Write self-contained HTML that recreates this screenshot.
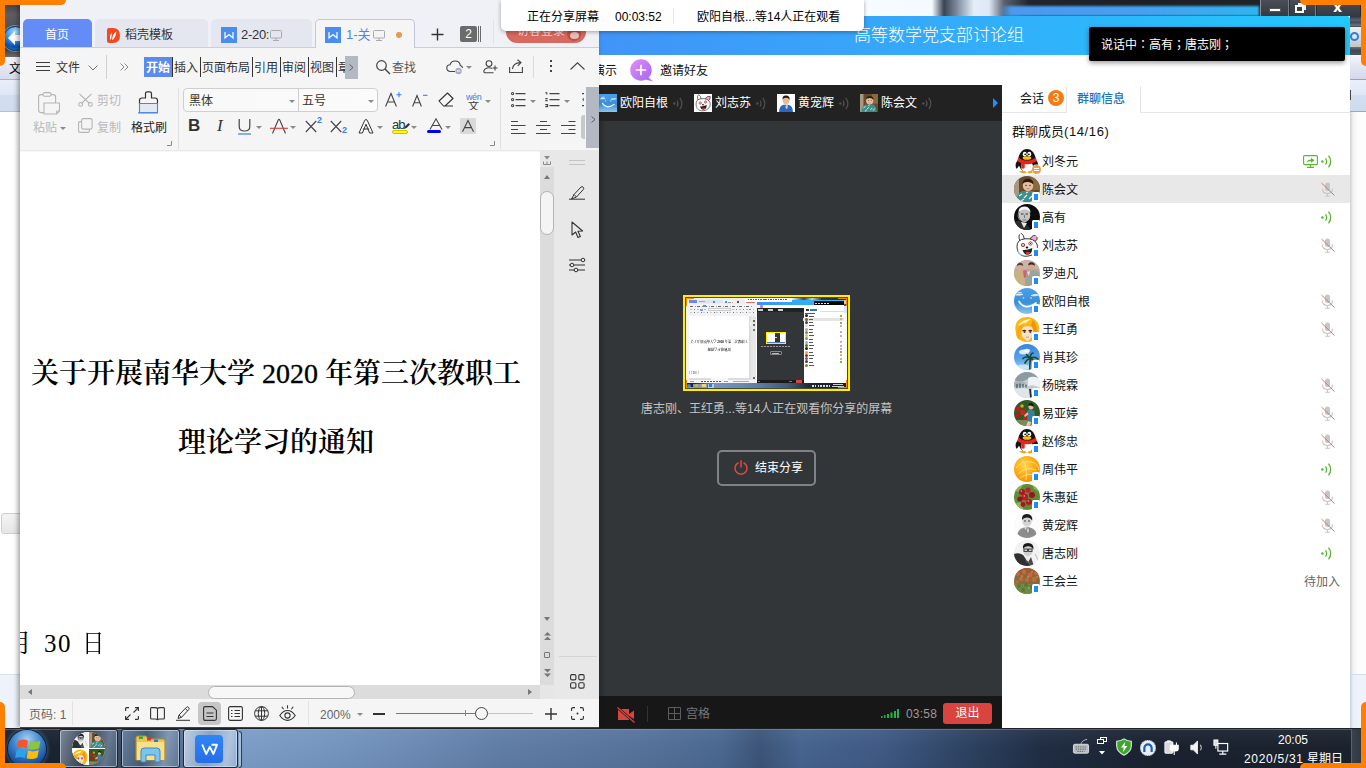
<!DOCTYPE html>
<html lang="zh-CN">
<head>
<meta charset="utf-8">
<title>屏幕分享</title>
<style>
*{box-sizing:border-box;margin:0;padding:0}
html,body{width:1366px;height:768px;overflow:hidden;background:#fff}
body{position:relative;font-family:"Liberation Sans","Noto Sans CJK SC",sans-serif;font-size:12px;color:#222}
.abs{position:absolute}
svg{position:absolute;overflow:visible}
/* ---------- background windows ---------- */
#bgleft{left:0;top:0;width:20px;height:728px;background:#fff;overflow:hidden}
#bgright{left:1350px;top:0;width:16px;height:728px;background:#fff;overflow:hidden}
#topbg{left:599px;top:0;width:767px;height:16px;background:#23272e;overflow:hidden}
/* ---------- WPS ---------- */
#wps{left:20px;top:0;width:579px;height:728px;background:#f5f5f5;box-shadow:-2px 0 5px rgba(0,0,0,.38)}
#wtitle{left:0;top:0;width:579px;height:48px;background:#f0f1f6}
#wmenu{left:0;top:48px;width:579px;height:38px;background:#f5f5f5}
#wribbon{left:0;top:86px;width:579px;height:64px;background:#f5f5f5}
#wdoc{left:0;top:150px;width:520px;height:535px;background:#fff;box-shadow:inset 0 2px 2px -1px rgba(0,0,0,.12)}
#wvs{left:520px;top:150px;width:14px;height:549px;background:#dcdcdc}
#wside{left:534px;top:150px;width:45px;height:549px;background:#e8e8e8}
#whs{left:0;top:685px;width:520px;height:14px;background:#dcdcdc}
#wstatus{left:0;top:699px;width:579px;height:29px;background:#f5f5f5;border-bottom:1px solid #444}

/* tabs */
.tab{position:absolute;top:19px;height:28px;border-radius:5px 5px 0 0;background:#e4e7f0}
.t{position:absolute;white-space:nowrap;line-height:1}
.w12{font-size:12px}
.wic{position:absolute;width:16px;height:16px;background:#4a8df0}

.sep{position:absolute;width:1px;background:#d9d9d9}
.car{position:absolute;width:0;height:0;border-left:3px solid transparent;border-right:3px solid transparent;border-top:3px solid #8a8a8a}
.mi{position:absolute;top:14px;font-size:12px;line-height:1;color:#333;white-space:nowrap}
.mb{position:absolute;top:9px;width:1px;height:20px;background:#333}

.rt{position:absolute;font-size:12px;line-height:1;white-space:nowrap;color:#333}
.dis{color:#b9b9b9}

.tri{position:absolute;width:0;height:0}
.h1{position:absolute;white-space:nowrap;font-family:"Liberation Serif","Noto Serif CJK SC",serif;font-weight:600;font-size:28px;line-height:1;color:#000}
/* ---------- QQ ---------- */
#qq{left:599px;top:16px;width:751px;height:712px;background:#fff}
#qhead{left:0;top:0;width:751px;height:39px;border-radius:0 3px 0 0;background:linear-gradient(90deg,#4194f7 0%,#36a8f9 40%,#22c8fc 100%)}
#qbar{left:0;top:39px;width:751px;height:30px;background:#fff}
#qdark{left:0;top:69px;width:403px;height:643px;background:linear-gradient(90deg,#292c2f 0,#323639 7px)}
#qstrip{left:0;top:0;width:403px;height:36px;background:#222}
#qbot{left:0;top:611px;width:403px;height:32px;background:#171717}
#qside{left:403px;top:70px;width:348px;height:642px;background:#fff}

.qt{position:absolute;font-size:12px;line-height:1;white-space:nowrap}
.pav{position:absolute;top:9px;width:18px;height:18px}
.pn{position:absolute;top:12px;font-size:12px;line-height:1;color:#fff;white-space:nowrap}
.row{position:absolute;left:0;width:348px;height:28px}
.av{position:absolute;left:12px;top:1px;width:26px;height:26px;border-radius:50%;overflow:hidden}
.nm{position:absolute;left:40px;top:9px;font-size:12px;line-height:1;color:#111;white-space:nowrap}
.ph{position:absolute;left:30px;top:17px;width:8px;height:10px;background:#fff;border-radius:1.5px;box-shadow:0 0 1px rgba(0,0,0,.25)}
.ph:after{content:"";position:absolute;left:1.7px;top:1.8px;width:4.6px;height:6.2px;background:#1e8bf0}
/* ---------- overlays ---------- */
#banner{left:501px;top:0;width:363px;height:31px;background:#fff;border-radius:0 0 5px 5px;box-shadow:0 1px 4px rgba(0,0,0,.35)}
#tip{left:1089px;top:27px;width:256px;height:34px;background:#000;border-radius:2px;box-shadow:0 2px 5px rgba(0,0,0,.4)}
#taskbar{left:0;top:728px;width:1366px;height:40px;overflow:hidden;background:linear-gradient(90deg,#18202c 0,#1a2430 58px,#7b9cc6 245px,#7696c0 320px,#6e8cb6 400px,#607da6 500px,#56729a 640px,#4a6890 720px,#3c5478 760px,#46648e 800px,#3f5a84 880px,#2e4464 960px,#202e44 1040px,#1a2230 1150px,#1a222e 100%);border-top:1px solid #1e2228;box-shadow:inset 0 1px 0 rgba(150,175,210,.35)}
.tb{position:absolute;top:0;height:39px;border:1px solid rgba(20,28,40,.9);border-radius:3px;box-shadow:inset 0 0 0 1px rgba(225,235,250,.55)}
.tx{position:absolute;font-size:12px;line-height:1;color:#fff;white-space:nowrap}
.org{background:#ff8000}
</style>
</head>
<body>
<div id="bgleft" class="abs">
  <div class="abs" style="left:0;top:0;width:20px;height:57px;background:linear-gradient(180deg,#3a3a3c 0,#5e5e62 25%,#4c4c50 60%,#3a3a3e 85%,#6a6e74 100%)"></div>
  <div class="abs" style="left:3px;top:26px;width:25px;height:25px;border-radius:50%;background:radial-gradient(circle at 50% 22%,#b8e0ff 0,#3f96ea 40%,#0b4fb0 70%,#19a0e0 100%);border:1px solid #143c80;box-shadow:0 0 0 1px rgba(150,160,170,.7)"></div>
  <svg style="left:8px;top:31px" width="12" height="14" viewBox="0 0 12 14"><path d="M0 7 L7 0 V4 H12 V10 H7 V14 Z" fill="#fff"/></svg>
  <div class="abs" style="left:0;top:57px;width:20px;height:22px;background:linear-gradient(180deg,#f4f5fb,#e2e5f2 50%,#d8dcec)"></div>
  <span class="t" style="left:9px;top:63px;font-size:12px;color:#000">文</span><span class="t" style="left:18px;top:90px;font-size:12px;color:#1a2a5a">组</span>
  <div class="abs" style="left:0;top:79px;width:20px;height:33px;background:linear-gradient(180deg,#e9eff9,#dde7f4 48%,#d3dff0 50%,#d0ddef);border-top:1px solid #aab2c8;border-bottom:1px solid #b4c0d6"></div>
  <div class="abs" style="left:1px;top:513px;width:26px;height:21px;border:1px solid #cfcfcf;border-radius:3px;background:linear-gradient(180deg,#f4f4f4,#e6e6e6)"></div>
  <div class="abs" style="left:0;top:674px;width:20px;height:54px;background:#eef3fb;border-top:1px solid #d6e0f0"></div>
</div>
<div id="bgright" class="abs">
  <div class="abs" style="left:0;top:0;width:16px;height:16px;background:#3a3f47"></div>
  <div class="abs" style="left:0;top:16px;width:16px;height:11px;background:linear-gradient(180deg,#2c323c 0,#58606c 35%,#454d59 60%,#6c7480 85%,#3a424e 100%)"></div>
  <div class="abs" style="left:0;top:27px;width:16px;height:20px;background:linear-gradient(180deg,#f0f0f0,#dcdcdc 50%,#c4c4c4)"></div>
  <div class="abs" style="left:0px;top:32px;width:9px;height:9px;border-radius:50%;border:2px solid #2f7fdc;background:#dfe8f4"></div>
  <div class="abs" style="left:0;top:47px;width:16px;height:8px;background:linear-gradient(180deg,#6a727e,#414955 40%,#4c5460)"></div>
  <div class="abs" style="left:0;top:55px;width:16px;height:25px;background:linear-gradient(180deg,#f4f5fb,#e2e5f2 50%,#d4d8ea);border-bottom:1px solid #98a4c0"></div>
  <div class="abs" style="left:0;top:80px;width:16px;height:32px;background:linear-gradient(180deg,#eaf0fa,#dfe8f5 48%,#d2dff0 50%,#cddbee);border-bottom:1px solid #98a8c4"></div>
  <div class="abs" style="left:0;top:90px;width:1px;height:10px;background:#444"></div>
  <div class="abs" style="left:0;top:112px;width:16px;height:562px;background:linear-gradient(90deg,#cfcfcf 0,#f2f2f2 3px,#fdfdfd 8px)"></div>
  <div class="abs" style="left:0;top:674px;width:16px;height:54px;background:linear-gradient(90deg,#c9cfd8 0,#e9eef8 3px,#eef3fb 8px);border-top:1px solid #d0dbee"></div>
</div>
<div id="topbg" class="abs">
  <div class="abs" style="left:265px;top:0;width:502px;height:16px;background:linear-gradient(90deg,#f7fcff 0,#f3f9fc 68px,#3a4452 80px,#7a8698 92px,#e4eefa 110px,#dfe8f4 125px,#5a6270 140px,#22262c 165px,#1c2026 277px,#23272e 100%)"></div>
  <div class="abs" style="left:400px;top:6px;width:260px;height:10px;background:linear-gradient(90deg,rgba(74,154,240,0) 0,#4a9af0 12px,#46a0f0 50%,#30b4f0 100%);filter:blur(1px)"></div>
  <div class="abs" style="left:661px;top:0;width:100px;height:16px;background:linear-gradient(180deg,#4a4e56,#353a42);border-left:1px solid #8a8e96"></div>
  <div class="abs" style="left:689px;top:0;width:1px;height:16px;background:#7a7e86;box-shadow:1px 0 0 #2a2e34"></div>
  <div class="abs" style="left:716px;top:0;width:1px;height:16px;background:#7a7e86;box-shadow:1px 0 0 #2a2e34"></div>
  <div class="abs" style="left:670px;top:8px;width:12px;height:4px;background:#fff;border:1px solid #555;border-radius:1px"></div>
  <div class="abs" style="left:699px;top:3px;width:8px;height:7px;border:2px solid #eee;border-top-width:2px"></div>
  <div class="abs" style="left:696px;top:5px;width:9px;height:8px;border:2px solid #fff;background:#3a3f47"></div>
  <span class="t" style="left:734px;top:0px;font-size:14px;font-weight:bold;color:#fff;font-family:'DejaVu Sans','Liberation Sans',sans-serif">x</span>
</div>

<div id="qq" class="abs">
  <div id="qhead" class="abs"><span class="qt" style="left:255px;top:11px;font-size:17px;color:#fff;font-weight:300">高等数学党支部讨论组</span></div>
  <div id="qbar" class="abs">
    <span class="qt" style="left:-6px;top:10px;color:#111">演示</span>
    <svg style="left:30.500px;top:3.800px" width="24" height="23" viewBox="0 0 23 22"><defs><linearGradient id="pg" x1="0" y1="0" x2="1" y2="1"><stop offset="0" stop-color="#e58cf7"/><stop offset="1" stop-color="#a368f5"/></linearGradient></defs><path d="M17 17 L22 21.5 L14 19.5 Z" fill="#a96cf5"/><circle cx="10.5" cy="10.5" r="10.3" fill="url(#pg)"/><path d="M10.5 5.5 V15.5 M5.5 10.5 H15.5" stroke="#fff" stroke-width="1.6"/></svg>
    <span class="qt" style="left:61px;top:10px;color:#111">邀请好友</span>
  </div>
  <div id="qdark" class="abs">
    <div id="qstrip" class="abs">
      <svg style="left:0px;top:9px" width="18" height="18" viewBox="0 0 26 26"><defs><linearGradient id="skAs0" x1="0" y1="0" x2="0" y2="1"><stop offset="0" stop-color="#4aa0e8"/><stop offset=".55" stop-color="#3a8ed8"/><stop offset="1" stop-color="#8cc8f2"/></linearGradient></defs><rect width="26" height="26" fill="url(#skAs0)"/><path d="M2 7 Q5 5 9 6.500 Q6 7.500 2 7 Z M17 7.500 Q21 5.500 25 7 Q21 8.500 17 7.500 Z M3 5 Q6 4 8 4.800" fill="#eaf6ff" stroke="#eaf6ff" stroke-width=".8" opacity=".9"/><path d="M5 13.500 Q11 23 22 15" fill="none" stroke="#f4fbff" stroke-width="1.700" stroke-linecap="round"/><circle cx="9.500" cy="10" r=".8" fill="#d8eeff"/><circle cx="17" cy="10" r=".8" fill="#d8eeff"/></svg>
      <span class="pn" style="left:21px">欧阳自根</span><svg style="left:74px;top:12px" width="11" height="13" viewBox="0 0 11 13"><circle cx="1.300" cy="6.500" r="1.200" fill="#505050"/><path d="M4 3.500 Q6 6.500 4 9.500 M6.800 .8 Q10.800 6.500 6.800 12.200" fill="none" stroke="#505050" stroke-width="1.200"/></svg>
      <svg style="left:95px;top:9px" width="18" height="18" viewBox="0 0 26 26"><rect width="26" height="26" fill="#fff"/><path d="M6 9 Q3.500 3 7 1 Q10 3 10.500 7.500 Z" fill="#fff" stroke="#222" stroke-width=".9"/><path d="M16 7 Q19 2 23.500 3.500 Q24 8 20 10.500 Z" fill="#f4a6c4" stroke="#222" stroke-width=".9"/><path d="M3 15 Q2.500 7.500 11 6.800 Q20 6 23 12 Q25 19 18 23 Q10 26 5.500 22 Q3 19.500 3 15 Z" fill="#fff" stroke="#222" stroke-width=".9"/><path d="M4 17 Q5 22 10 23.500 Q5.500 24 3.500 19 Z" fill="#a8d0ee"/><circle cx="9" cy="13" r="1.700" fill="#fff" stroke="#c02020" stroke-width=".9"/><circle cx="16.500" cy="11.500" r="1.700" fill="#fff" stroke="#c02020" stroke-width=".9"/><circle cx="9" cy="13" r=".6" fill="#111"/><circle cx="16.500" cy="11.500" r=".6" fill="#111"/><ellipse cx="13" cy="15.500" rx="1.300" ry="1" fill="#111"/><path d="M8.500 18 Q13 18.500 18.500 16 Q18 22.500 13.500 22.800 Q10 22.500 8.500 18 Z" fill="#222"/><path d="M11.500 20.500 Q14 19 16 20.300 Q15.500 22.500 13.500 22.800 Q12 22.300 11.500 20.500 Z" fill="#e83030"/></svg>
      <span class="pn" style="left:116px">刘志苏</span><svg style="left:157px;top:12px" width="11" height="13" viewBox="0 0 11 13"><circle cx="1.300" cy="6.500" r="1.200" fill="#505050"/><path d="M4 3.500 Q6 6.500 4 9.500 M6.800 .8 Q10.800 6.500 6.800 12.200" fill="none" stroke="#505050" stroke-width="1.200"/></svg>
      <svg style="left:178px;top:9px" width="18" height="18" viewBox="0 0 26 26"><rect width="26" height="26" fill="#fdfdfd"/><path d="M3 26 Q3 17 10 15.500 H16 Q23 17 23 26 Z" fill="#2668c8"/><ellipse cx="13" cy="9" rx="4.800" ry="5.800" fill="#e8bc98"/><path d="M8 8 Q7.500 1.800 13 2 Q18.800 2 18.200 8.500 Q16 4.800 12.500 5.500 Q9.500 5.500 8 8 Z" fill="#1c1c1c"/><path d="M12 18 Q13 14.500 15.500 16 Q16.500 19 14.500 22 Q12.500 21.500 12 18 Z" fill="#e8bc98"/></svg>
      <span class="pn" style="left:199px">黄宠辉</span><svg style="left:240px;top:12px" width="11" height="13" viewBox="0 0 11 13"><circle cx="1.300" cy="6.500" r="1.200" fill="#505050"/><path d="M4 3.500 Q6 6.500 4 9.500 M6.800 .8 Q10.800 6.500 6.800 12.200" fill="none" stroke="#505050" stroke-width="1.200"/></svg>
      <svg style="left:261px;top:9px" width="18" height="18" viewBox="0 0 26 26"><rect width="26" height="26" fill="#6b4a2c"/><rect x="0" y="0" width="5" height="26" fill="#a89880"/><rect x="17" y="0" width="9" height="14" fill="#8a6a3c"/><path d="M2 26 Q3 16 9 15 L19 15 Q24 17 24 26 Z" fill="#3e8e8c"/><path d="M5 20 L8 18 M10 22 L13 19 M15 23 L18 20 M7 25 L10 23 M19 24 L21 21 M12 17 L14 16" stroke="#e4f2f0" stroke-width="1.300"/><ellipse cx="14" cy="9.500" rx="5.200" ry="5.800" fill="#e6bf9f"/><path d="M8.500 8 Q9 2.500 14 2.800 Q19.500 3 19.500 8.500 Q17 5.500 13 6 Q10 6 8.500 8 Z" fill="#2a1c12"/><circle cx="12" cy="9.500" r=".7" fill="#2a1c12"/><circle cx="16" cy="9.500" r=".7" fill="#2a1c12"/><path d="M12.500 12.500 Q14 13.300 15.500 12.500" stroke="#b06050" stroke-width=".7" fill="none"/></svg>
      <span class="pn" style="left:282px">陈会文</span><svg style="left:323px;top:12px" width="11" height="13" viewBox="0 0 11 13"><circle cx="1.300" cy="6.500" r="1.200" fill="#505050"/><path d="M4 3.500 Q6 6.500 4 9.500 M6.800 .8 Q10.800 6.500 6.800 12.200" fill="none" stroke="#505050" stroke-width="1.200"/></svg>
      <div class="tri" style="left:394px;top:13px;border-top:5px solid transparent;border-bottom:5px solid transparent;border-left:5px solid #1e90ff"></div>
    </div>
    <div class="abs" style="left:84px;top:210px;width:167px;height:96px;background:#ffee00"></div>
    <div id="mini" class="abs" style="left:87px;top:213px;width:161px;height:90px;background:#fff;overflow:hidden;outline:1px solid #4a4a30">
      <div class="abs" style="left:0;top:0;width:3px;height:90px;background:#f4f4f4"></div>
      <div class="abs" style="left:106px;top:0;width:55px;height:2px;background:linear-gradient(90deg,#eee 0,#444 12px,#ccc 20px,#333 30px,#2a2e34)"></div>
      <div class="abs" style="left:70px;top:2px;width:88px;height:5px;background:linear-gradient(90deg,#3f8cf6,#34a6f8 40%,#22c8fb)"></div>
      <div class="abs" style="left:70px;top:7px;width:88px;height:3px;background:#fff"></div>
      <div class="abs" style="left:74px;top:7px;width:2.500px;height:2.500px;border-radius:50%;background:#c070f0"></div>
      <div class="abs" style="left:70px;top:10px;width:48px;height:75px;background:#323639"></div>
      <div class="abs" style="left:70px;top:10px;width:48px;height:4px;background:#222"></div>
      <div class="abs" style="left:72px;top:11px;width:30px;height:2px;background:repeating-linear-gradient(90deg,#ccc 0 5px,#222 5px 10px)"></div>
      <div class="abs" style="left:70px;top:81.500px;width:48px;height:3.500px;background:#1b1b1b"></div>
      <div class="abs" style="left:72px;top:82.500px;width:2px;height:1.500px;background:#d8453f"></div>
      <div class="abs" style="left:103px;top:83px;width:3px;height:1px;background:#22b14c"></div>
      <div class="abs" style="left:110px;top:82px;width:6px;height:2.500px;background:#d9443f"></div>
      <div class="abs" style="left:79.500px;top:34px;width:20px;height:11.500px;background:#ffee00"></div>
      <div class="abs" style="left:80.500px;top:35px;width:18px;height:9.500px;background:linear-gradient(90deg,#fff 0 44%,#323639 44% 73%,#fff 73%)"></div>
      <div class="abs" style="left:80.500px;top:43.500px;width:18px;height:1px;background:#5a7aa4"></div>
      <div class="abs" style="left:88.500px;top:38.500px;width:2.500px;height:1.500px;background:#ffee00"></div>
      <div class="abs" style="left:75px;top:47.500px;width:29px;height:1px;background:repeating-linear-gradient(90deg,#999 0 2px,#444 2px 3px)"></div>
      <div class="abs" style="left:83.500px;top:53px;width:12px;height:4px;border:.5px solid #888;border-radius:1px"></div>
      <div class="abs" style="left:86px;top:54.500px;width:7px;height:1px;background:#bbb"></div>
      <div class="abs" style="left:117.500px;top:10px;width:40.500px;height:75px;background:#fff"></div>
      <div class="abs" style="left:119.500px;top:11px;width:11px;height:1.500px;background:repeating-linear-gradient(90deg,#333 0 3px,#fff 3px 4px,#2a7ac8 4px 11px)"></div>
      <div class="abs" style="left:134px;top:13px;width:24px;height:.5px;background:#ddd"></div>
      <div class="abs" style="left:119px;top:14.500px;width:10px;height:1px;background:#555"></div>
      <div class="abs" style="left:119px;top:16.4px;width:3px;height:3px;border-radius:50%;background:#222"></div><div class="abs" style="left:122.5px;top:17.6px;width:5px;height:1px;background:#555"></div><div class="abs" style="left:154px;top:17.0px;width:2px;height:2px;background:#70c040"></div><div class="abs" style="left:117px;top:19.7px;width:41px;height:3.3px;background:#e4e4e4"></div><div class="abs" style="left:119px;top:19.7px;width:3px;height:3px;border-radius:50%;background:#7a5a40"></div><div class="abs" style="left:122.5px;top:20.9px;width:4px;height:1px;background:#555"></div><div class="abs" style="left:154px;top:20.3px;width:2px;height:2px;background:#e8a0a0"></div><div class="abs" style="left:119px;top:23.0px;width:3px;height:3px;border-radius:50%;background:#444"></div><div class="abs" style="left:122.5px;top:24.2px;width:4px;height:1px;background:#555"></div><div class="abs" style="left:154px;top:23.6px;width:2px;height:2px;background:#70c040"></div><div class="abs" style="left:119px;top:26.2px;width:3px;height:3px;border-radius:50%;background:#ddd"></div><div class="abs" style="left:122.5px;top:27.4px;width:5px;height:1px;background:#555"></div><div class="abs" style="left:154px;top:26.8px;width:2px;height:2px;background:#e8a0a0"></div><div class="abs" style="left:119px;top:29.5px;width:3px;height:3px;border-radius:50%;background:#c0a090"></div><div class="abs" style="left:122.5px;top:30.7px;width:4px;height:1px;background:#555"></div><div class="abs" style="left:119px;top:32.8px;width:3px;height:3px;border-radius:50%;background:#3a90e0"></div><div class="abs" style="left:122.5px;top:34.0px;width:4px;height:1px;background:#555"></div><div class="abs" style="left:154px;top:33.4px;width:2px;height:2px;background:#e8a0a0"></div><div class="abs" style="left:119px;top:36.1px;width:3px;height:3px;border-radius:50%;background:#f0c020"></div><div class="abs" style="left:122.5px;top:37.3px;width:5px;height:1px;background:#555"></div><div class="abs" style="left:154px;top:36.7px;width:2px;height:2px;background:#e8a0a0"></div><div class="abs" style="left:119px;top:39.4px;width:3px;height:3px;border-radius:50%;background:#4a98e0"></div><div class="abs" style="left:122.5px;top:40.6px;width:4px;height:1px;background:#555"></div><div class="abs" style="left:119px;top:42.6px;width:3px;height:3px;border-radius:50%;background:#a0a8b0"></div><div class="abs" style="left:122.5px;top:43.8px;width:4px;height:1px;background:#555"></div><div class="abs" style="left:154px;top:43.2px;width:2px;height:2px;background:#e8a0a0"></div><div class="abs" style="left:119px;top:45.9px;width:3px;height:3px;border-radius:50%;background:#4a7a30"></div><div class="abs" style="left:122.5px;top:47.1px;width:5px;height:1px;background:#555"></div><div class="abs" style="left:154px;top:46.5px;width:2px;height:2px;background:#e8a0a0"></div><div class="abs" style="left:119px;top:49.2px;width:3px;height:3px;border-radius:50%;background:#222"></div><div class="abs" style="left:122.5px;top:50.4px;width:4px;height:1px;background:#555"></div><div class="abs" style="left:154px;top:49.8px;width:2px;height:2px;background:#e8a0a0"></div><div class="abs" style="left:119px;top:52.5px;width:3px;height:3px;border-radius:50%;background:#f8a010"></div><div class="abs" style="left:122.5px;top:53.7px;width:4px;height:1px;background:#555"></div><div class="abs" style="left:154px;top:53.1px;width:2px;height:2px;background:#70c040"></div><div class="abs" style="left:119px;top:55.8px;width:3px;height:3px;border-radius:50%;background:#a02030"></div><div class="abs" style="left:122.5px;top:57.0px;width:5px;height:1px;background:#555"></div><div class="abs" style="left:154px;top:56.4px;width:2px;height:2px;background:#e8a0a0"></div><div class="abs" style="left:119px;top:59.0px;width:3px;height:3px;border-radius:50%;background:#666"></div><div class="abs" style="left:122.5px;top:60.2px;width:4px;height:1px;background:#555"></div><div class="abs" style="left:154px;top:59.6px;width:2px;height:2px;background:#e8a0a0"></div><div class="abs" style="left:119px;top:62.3px;width:3px;height:3px;border-radius:50%;background:#444"></div><div class="abs" style="left:122.5px;top:63.5px;width:4px;height:1px;background:#555"></div><div class="abs" style="left:154px;top:62.9px;width:2px;height:2px;background:#70c040"></div><div class="abs" style="left:119px;top:65.6px;width:3px;height:3px;border-radius:50%;background:#7a8a30"></div><div class="abs" style="left:122.5px;top:66.8px;width:5px;height:1px;background:#555"></div>
      <div class="abs" style="left:158px;top:2px;width:3px;height:83px;background:linear-gradient(180deg,#ccc 0 4px,#556 4px 6px,#dde4f2 6px 13px,#fafafa 13px)"></div>
      <div class="abs" style="left:127.500px;top:3px;width:30px;height:4px;background:#000"></div>
      <div class="abs" style="left:129px;top:4.500px;width:14px;height:1px;background:repeating-linear-gradient(90deg,#ddd 0 2px,#000 2px 3px)"></div>
      <!-- WPS -->
      <div class="abs" style="left:2.500px;top:0;width:68px;height:85.300px;background:#fff"></div>
      <div class="abs" style="left:2.500px;top:0;width:68px;height:17.500px;background:#f3f3f5"></div>
      <div class="abs" style="left:2.500px;top:0;width:68px;height:5.500px;background:#eceef4"></div>
      <div class="abs" style="left:3px;top:2.300px;width:8px;height:3.200px;background:#638cf7"></div>
      <div class="abs" style="left:11.500px;top:2.300px;width:13px;height:3.200px;background:#e0e3ec"></div>
      <div class="abs" style="left:25px;top:2.300px;width:11.500px;height:3.200px;background:#dfe4f0"></div>
      <div class="abs" style="left:37px;top:2.300px;width:11.500px;height:3.200px;background:#f5f5f5"></div>
      <div class="abs" style="left:13px;top:3.300px;width:6px;height:1.200px;background:#aaa"></div>
      <div class="abs" style="left:26.500px;top:3px;width:2px;height:2px;background:#4a8df0"></div>
      <div class="abs" style="left:38.500px;top:3px;width:2px;height:2px;background:#4a8df0"></div>
      <div class="abs" style="left:41.500px;top:3.500px;width:3px;height:1px;background:#7aa0f0"></div>
      <div class="abs" style="left:46px;top:3.500px;width:1px;height:1px;background:#e99a4c"></div>
      <div class="abs" style="left:51px;top:3px;width:2px;height:2px;background:#555"></div>
      <div class="abs" style="left:59.500px;top:2.500px;width:9px;height:2.500px;border-radius:1.200px;background:#d8695e"></div>
      <div class="abs" style="left:4px;top:7.500px;width:62px;height:1.200px;background:repeating-linear-gradient(90deg,#666 0 3px,#f3f3f5 3px 4.500px,#999 4.500px 6px,#f3f3f5 6px 7px)"></div>
      <div class="abs" style="left:16.800px;top:7px;width:3.300px;height:2.300px;background:#5b8cec"></div>
      <div class="abs" style="left:4px;top:11px;width:64px;height:1.200px;background:repeating-linear-gradient(90deg,#bbb 0 2px,#f3f3f5 2px 3.500px,#888 3.500px 5px,#f3f3f5 5px 7px)"></div>
      <div class="abs" style="left:4px;top:14px;width:64px;height:1.200px;background:repeating-linear-gradient(90deg,#ccc 0 2px,#f3f3f5 2px 4px,#777 4px 5px,#f3f3f5 5px 6.500px)"></div>
      <div class="abs" style="left:14px;top:11px;width:2.500px;height:2px;background:#7aa0e8"></div>
      <div class="abs" style="left:21.500px;top:10.300px;width:23px;height:2.800px;background:#fafafa;border:.5px solid #ccc"></div>
      <div class="abs" style="left:63.300px;top:17.500px;width:1.600px;height:64.500px;background:#dcdcdc"></div>
      <div class="abs" style="left:64.900px;top:17.500px;width:5.300px;height:64.500px;background:#e8e8e8"></div>
      <div class="abs" style="left:66.500px;top:22px;width:2px;height:1.500px;background:#666"></div>
      <div class="abs" style="left:66.500px;top:26px;width:2px;height:2px;background:#666"></div>
      <div class="abs" style="left:66.500px;top:30.500px;width:2px;height:2px;background:#777"></div>
      <div class="abs" style="left:66.500px;top:79px;width:2px;height:2px;background:#666"></div>
      <div class="abs" style="left:63.500px;top:22.500px;width:1.300px;height:5px;background:#f4f4f4"></div>
      <div class="abs" style="left:2.500px;top:0;width:520px;height:728px;transform:scale(.1172);transform-origin:0 0;pointer-events:none"><div class="h1" style="left:11px;top:360px">关于开展南华大学 2020 年第三次教职工</div><div class="h1" style="left:158px;top:429px">理论学习的通知</div><div class="abs" style="left:0;top:630px;font-family:'Liberation Serif','Noto Serif CJK SC',serif;font-size:25px;line-height:1;color:#000;white-space:nowrap">月 30 日</div></div>
            <div class="abs" style="left:2.500px;top:80.200px;width:61px;height:1.700px;background:#dcdcdc"></div>
      <div class="abs" style="left:24.500px;top:80.400px;width:17px;height:1.300px;background:#f7f7f7"></div>
      <div class="abs" style="left:2.500px;top:81.900px;width:68px;height:3.400px;background:#f5f5f5"></div>
      <div class="abs" style="left:4px;top:83px;width:4px;height:1px;background:#999"></div>
      <div class="abs" style="left:15px;top:83px;width:20px;height:1.200px;background:repeating-linear-gradient(90deg,#555 0 1.500px,#f5f5f5 1.500px 3px)"></div>
      <div class="abs" style="left:38px;top:83px;width:4px;height:1px;background:#999"></div>
      <div class="abs" style="left:46.500px;top:83.300px;width:16px;height:.5px;background:#aaa"></div>
      <!-- banner -->
      <div class="abs" style="left:58.700px;top:0;width:47px;height:3.600px;background:#fff"></div>
      <div class="abs" style="left:62px;top:1.300px;width:40px;height:1px;background:repeating-linear-gradient(90deg,#333 0 1.500px,#fff 1.500px 2.500px);opacity:.8"></div>
      <!-- taskbar -->
      <div class="abs" style="left:0;top:85.300px;width:161px;height:4.700px;background:linear-gradient(90deg,#18202c 0,#1a2430 7px,#7395c2 29px,#6a8ab4 56px,#587aa6 75px,#425878 103px,#222c3c 122px,#1a222e 135px)"></div>
      <div class="abs" style="left:1px;top:85.500px;width:4.300px;height:4.300px;border-radius:50%;background:#3f86d0"></div>
      <div class="abs" style="left:7.200px;top:85.500px;width:6.500px;height:4.300px;background:#8898a8"></div>
      <div class="abs" style="left:9px;top:86px;width:3.300px;height:3.300px;border-radius:50%;background:#d8b040"></div>
      <div class="abs" style="left:14.300px;top:85.500px;width:6.700px;height:4.300px;background:#8aa0b8"></div>
      <div class="abs" style="left:16px;top:86px;width:3.500px;height:3.300px;background:#f0d878"></div>
      <div class="abs" style="left:21.500px;top:85.500px;width:6.300px;height:4.300px;background:#b8cce4"></div>
      <div class="abs" style="left:23px;top:86px;width:3.300px;height:3.300px;background:#2a7af0"></div>
      <div class="abs" style="left:126px;top:87px;width:19px;height:1.500px;background:repeating-linear-gradient(90deg,#ddd 0 1.500px,rgba(0,0,0,0) 1.500px 2.800px)"></div>
      <div class="abs" style="left:147px;top:86.200px;width:10px;height:1px;background:#ccc"></div>
      <div class="abs" style="left:146px;top:88.200px;width:11.500px;height:1px;background:#ccc"></div>
      <!-- orange corners -->
      <div class="abs org" style="left:0;top:0;width:7.700px;height:.7px"></div><div class="abs org" style="left:0;top:0;width:.7px;height:7.700px"></div>
      <div class="abs org" style="left:152.300px;top:0;width:7.700px;height:.7px"></div><div class="abs org" style="left:160.300px;top:0;width:.7px;height:7.700px"></div>
      <div class="abs org" style="left:0;top:89.300px;width:7.700px;height:.7px"></div><div class="abs org" style="left:0;top:82.300px;width:.7px;height:7.700px"></div>
      <div class="abs org" style="left:152.300px;top:89.300px;width:7.700px;height:.7px"></div><div class="abs org" style="left:160.300px;top:82.300px;width:.7px;height:7.700px"></div>
    </div>
    <span class="qt" style="left:42px;top:318px;color:#c4c4c4">唐志刚、王红勇...等14人正在观看你分享的屏幕</span>
    <div class="abs" style="left:118px;top:365px;width:99px;height:36px;border:2px solid #808386;border-radius:5px"></div>
    <svg style="left:135px;top:375px" width="14" height="15" viewBox="0 0 14 15"><path d="M4 3 A6 6 0 1 0 10 3" fill="none" stroke="#e04a43" stroke-width="1.5" stroke-linecap="round"/><path d="M7 .8 V7" stroke="#e04a43" stroke-width="1.5" stroke-linecap="round"/></svg>
    <span class="qt" style="left:156px;top:377px;color:#fff">结束分享</span>
    <div id="qbot" class="abs">
      <svg style="left:18px;top:11px" width="20" height="16" viewBox="0 0 20 16"><path d="M1 2 H12 V7 L17 3.5 V12 L12 9 V13 H1 Z" fill="#d8453f"/><path d="M1 1 L17 15" stroke="#1b1b1b" stroke-width="2.4"/><path d="M.5 .5 L17.5 15.5" stroke="#d8453f" stroke-width="1.2"/></svg>
      <div class="abs" style="left:48px;top:10px;width:1px;height:16px;background:#333"></div>
      <svg style="left:69px;top:11px" width="13" height="13" viewBox="0 0 13 13"><path d="M.5 .5 H12.5 V12.5 H.5 Z M6.5 .5 V12.5 M.5 6.5 H12.5" fill="none" stroke="#5c5c5c" stroke-width="1"/></svg>
      <span class="qt" style="left:87px;top:12px;color:#767676">宫格</span>
      <svg style="left:282px;top:13px" width="18" height="9" viewBox="0 0 18 9"><g fill="#22b14c"><rect x="0" y="7" width="1.5" height="2"/><rect x="3" y="6" width="1.5" height="3"/><rect x="6" y="5" width="2" height="4"/><rect x="9.5" y="3.5" width="2" height="5.5"/><rect x="13" y="2" width="2" height="7"/><rect x="16" y="0" width="2" height="9"/></g></svg>
      <span class="qt" style="left:307px;top:12px;color:#9a9a9a;letter-spacing:.2px">03:58</span>
      <div class="abs" style="left:344px;top:7px;width:49px;height:21px;background:#d9443f;border-radius:3px;color:#fff;font-size:12px;line-height:21px;text-align:center">退出</div>
    </div>
  </div>
  <div id="qside" class="abs">
    <span class="qt" style="left:18px;top:7px;color:#111">会话</span>
    <div class="abs" style="left:46px;top:4px;width:16px;height:16px;border-radius:50%;background:#f57a14;color:#fff;font-size:12px;line-height:16px;text-align:center">3</div>
    <div class="abs" style="left:0;top:26px;width:65px;height:1px;background:#e6e6e6"></div>
    <div class="abs" style="left:64px;top:0;width:1px;height:27px;background:#e6e6e6"></div>
    <span class="qt" style="left:75px;top:7px;color:#1a74c0;font-weight:500">群聊信息</span>
    <div class="abs" style="left:138px;top:0;width:1px;height:27px;background:#e6e6e6"></div>
    <div class="abs" style="left:138px;top:26px;width:210px;height:1px;background:#e6e6e6"></div>
    <span class="qt" style="left:10px;top:39px;color:#111;font-size:13px">群聊成员<span style="letter-spacing:.6px">(14/16)</span></span>
    <div class="row" style="top:61px"><div class="av"><svg style="left:0;top:0" width="26" height="26" viewBox="1 0.8 24 25.2" preserveAspectRatio="none"><ellipse cx="13" cy="13" rx="8.300" ry="11.200" fill="#141414"/><path d="M5.200 12 Q1.200 15.500 3 21.500 Q5.200 19.500 6.200 16.500 Z M20.800 12 Q24.800 15.500 23 21.500 Q20.800 19.500 19.800 16.500 Z" fill="#141414"/><ellipse cx="13" cy="18.700" rx="5.500" ry="5.500" fill="#fff"/><ellipse cx="10.900" cy="6.800" rx="1.800" ry="2.400" fill="#fff"/><ellipse cx="15.100" cy="6.800" rx="1.800" ry="2.400" fill="#fff"/><circle cx="11.300" cy="7" r=".8" fill="#111"/><circle cx="14.700" cy="7" r=".8" fill="#111"/><ellipse cx="13" cy="10.600" rx="4" ry="1.700" fill="#f8c400"/><path d="M4.800 10 Q13 16.500 21.200 10 L22 13.600 Q13 19.600 4 13.600 Z" fill="#e8251c"/><path d="M7.800 15.300 L11 16.600 L10.800 20.300 Q9.200 21.600 7.600 20 Z" fill="#e8251c"/><ellipse cx="8.200" cy="24.300" rx="3.800" ry="1.500" fill="#f8a800"/><ellipse cx="17.800" cy="24.300" rx="3.800" ry="1.500" fill="#f8a800"/></svg></div><div class="abs" style="left:29.500px;top:18px;width:9px;height:9px;border-radius:50%;background:#f59a3c;box-shadow:0 0 0 .5px #fff"></div><div class="abs" style="left:31.500px;top:21px;width:5px;height:1px;background:#fff;box-shadow:0 2px 0 #fff"></div><span class="nm">刘冬元</span><svg style="left:301px;top:8px" width="15" height="13" viewBox="0 0 15 13"><rect x=".6" y=".6" width="13.8" height="9" rx="1" fill="none" stroke="#5cb531" stroke-width="1.1"/><path d="M7.5 9.6 V12 M4 12.4 H11" stroke="#5cb531" stroke-width="1.1"/><path d="M3.5 7.5 Q4.5 4.5 8 4.5 V2.800 L11.5 5.3 L8 7.800 V6.2 Q5.5 6 3.5 7.5 Z" fill="#5cb531"/></svg><svg style="left:319px;top:8px" width="12" height="13" viewBox="0 0 12 13"><circle cx="1.400" cy="6.500" r="1.300" fill="#5cb531"/><path d="M4.500 3.300 Q6.800 6.500 4.500 9.700 M7.500 .7 Q12 6.500 7.500 12.300" fill="none" stroke="#5cb531" stroke-width="1.300"/></svg></div>
    <div class="row" style="top:89px;background:#e8e8e8"><div class="av"><svg style="left:0;top:0" width="26" height="26" viewBox="0 0 26 26"><rect width="26" height="26" fill="#6b4a2c"/><rect x="0" y="0" width="5" height="26" fill="#a89880"/><rect x="17" y="0" width="9" height="14" fill="#8a6a3c"/><path d="M2 26 Q3 16 9 15 L19 15 Q24 17 24 26 Z" fill="#3e8e8c"/><path d="M5 20 L8 18 M10 22 L13 19 M15 23 L18 20 M7 25 L10 23 M19 24 L21 21 M12 17 L14 16" stroke="#e4f2f0" stroke-width="1.300"/><ellipse cx="14" cy="9.500" rx="5.200" ry="5.800" fill="#e6bf9f"/><path d="M8.500 8 Q9 2.500 14 2.800 Q19.500 3 19.500 8.500 Q17 5.500 13 6 Q10 6 8.500 8 Z" fill="#2a1c12"/><circle cx="12" cy="9.500" r=".7" fill="#2a1c12"/><circle cx="16" cy="9.500" r=".7" fill="#2a1c12"/><path d="M12.500 12.500 Q14 13.300 15.500 12.500" stroke="#b06050" stroke-width=".7" fill="none"/></svg></div><div class="ph"></div><span class="nm">陈会文</span><svg style="left:318px;top:7px" width="16" height="15" viewBox="0 0 16 15"><rect x="5" y=".5" width="5" height="8.5" rx="2.5" fill="#c6c6c6"/><path d="M2.5 6.5 Q2.5 11.5 7.5 11.5 Q12.5 11.5 12.5 6.5 M7.5 11.5 V14 M5 14.2 H10" fill="none" stroke="#c6c6c6" stroke-width="1.1"/><path d="M1.5 1 L14.5 13.5" stroke="#ee6a6a" stroke-width="1"/></svg></div>
    <div class="row" style="top:117px"><div class="av"><svg style="left:0;top:0" width="26" height="26" viewBox="0 0 26 26"><rect width="26" height="26" fill="#0c0c0c"/><path d="M0 26 V18 Q6 15 11 18 L17 26 Z" fill="#2c2c2c"/><path d="M7 18 L10 24 L13 19 Z" fill="#e8e8e8"/><ellipse cx="10.500" cy="11" rx="5.800" ry="7.200" fill="#c4c4c4"/><path d="M4.500 9 Q4 2 11 2.500 Q16.500 3 16.500 9 Q14 5 10.500 5.500 Q6.500 5.500 4.500 9 Z" fill="#f4f4f4"/><path d="M7 10 H9.500 M11.500 10 H14" stroke="#333" stroke-width="1"/><path d="M10.500 11 V14 M8.500 16 H12.500" stroke="#666" stroke-width=".8"/><path d="M4.700 8 Q3 12 5.500 16" stroke="#888" stroke-width="1" fill="none"/></svg></div><div class="ph"></div><span class="nm">高有</span><svg style="left:319px;top:8px" width="12" height="13" viewBox="0 0 12 13"><circle cx="1.400" cy="6.500" r="1.300" fill="#5cb531"/><path d="M4.500 3.300 Q6.800 6.500 4.500 9.700 M7.500 .7 Q12 6.500 7.500 12.300" fill="none" stroke="#5cb531" stroke-width="1.300"/></svg></div>
    <div class="row" style="top:145px"><div class="av"><svg style="left:0;top:0" width="26" height="26" viewBox="0 0 26 26"><rect width="26" height="26" fill="#fff"/><path d="M6 9 Q3.500 3 7 1 Q10 3 10.500 7.500 Z" fill="#fff" stroke="#222" stroke-width=".9"/><path d="M16 7 Q19 2 23.500 3.500 Q24 8 20 10.500 Z" fill="#f4a6c4" stroke="#222" stroke-width=".9"/><path d="M3 15 Q2.500 7.500 11 6.800 Q20 6 23 12 Q25 19 18 23 Q10 26 5.500 22 Q3 19.500 3 15 Z" fill="#fff" stroke="#222" stroke-width=".9"/><path d="M4 17 Q5 22 10 23.500 Q5.500 24 3.500 19 Z" fill="#a8d0ee"/><circle cx="9" cy="13" r="1.700" fill="#fff" stroke="#c02020" stroke-width=".9"/><circle cx="16.500" cy="11.500" r="1.700" fill="#fff" stroke="#c02020" stroke-width=".9"/><circle cx="9" cy="13" r=".6" fill="#111"/><circle cx="16.500" cy="11.500" r=".6" fill="#111"/><ellipse cx="13" cy="15.500" rx="1.300" ry="1" fill="#111"/><path d="M8.500 18 Q13 18.500 18.500 16 Q18 22.500 13.500 22.800 Q10 22.500 8.500 18 Z" fill="#222"/><path d="M11.500 20.500 Q14 19 16 20.300 Q15.500 22.500 13.500 22.800 Q12 22.300 11.500 20.500 Z" fill="#e83030"/></svg></div><div class="ph"></div><span class="nm">刘志苏</span><svg style="left:318px;top:7px" width="16" height="15" viewBox="0 0 16 15"><rect x="5" y=".5" width="5" height="8.5" rx="2.5" fill="#c6c6c6"/><path d="M2.5 6.5 Q2.5 11.5 7.5 11.5 Q12.5 11.5 12.5 6.5 M7.5 11.5 V14 M5 14.2 H10" fill="none" stroke="#c6c6c6" stroke-width="1.1"/><path d="M1.5 1 L14.5 13.5" stroke="#ee6a6a" stroke-width="1"/></svg></div>
    <div class="row" style="top:173px"><div class="av"><svg style="left:0;top:0" width="26" height="26" viewBox="0 0 26 26"><rect width="26" height="26" fill="#b8a89c"/><rect x="0" y="0" width="26" height="9" fill="#c8b4ac"/><path d="M0 26 V12 Q4 8.500 9 11 L12 26 Z" fill="#c9b183"/><path d="M11 26 L12 12 Q17 8 22 11 Q26 13 26 16 V26 Z" fill="#9ca39c"/><ellipse cx="6" cy="7" rx="3.200" ry="3.800" fill="#d8ae8e"/><ellipse cx="17.500" cy="6.500" rx="3.300" ry="3.900" fill="#d4a888"/><path d="M2.800 6 Q3 2.500 6 2.700 Q9.200 2.800 9.200 6 Q6 4 2.800 6 Z" fill="#5a4030"/><path d="M14.200 5.500 Q14.500 2 17.500 2.200 Q21 2.400 20.800 5.800 Q17.500 3.500 14.200 5.500 Z" fill="#3a2a20"/><path d="M9 11 L12.500 10 L12 17 L10 18 Z" fill="#d85a70"/><path d="M13 12 L16 11 L15 16 Z" fill="#e8e0d8"/></svg></div><div class="ph"></div><span class="nm">罗迪凡</span></div>
    <div class="row" style="top:201px"><div class="av"><svg style="left:0;top:0" width="26" height="26" viewBox="0 0 26 26"><defs><linearGradient id="skA" x1="0" y1="0" x2="0" y2="1"><stop offset="0" stop-color="#4aa0e8"/><stop offset=".55" stop-color="#3a8ed8"/><stop offset="1" stop-color="#8cc8f2"/></linearGradient></defs><rect width="26" height="26" fill="url(#skA)"/><path d="M2 7 Q5 5 9 6.500 Q6 7.500 2 7 Z M17 7.500 Q21 5.500 25 7 Q21 8.500 17 7.500 Z M3 5 Q6 4 8 4.800" fill="#eaf6ff" stroke="#eaf6ff" stroke-width=".8" opacity=".9"/><path d="M5 13.500 Q11 23 22 15" fill="none" stroke="#f4fbff" stroke-width="1.700" stroke-linecap="round"/><circle cx="9.500" cy="10" r=".8" fill="#d8eeff"/><circle cx="17" cy="10" r=".8" fill="#d8eeff"/></svg></div><div class="ph"></div><span class="nm">欧阳自根</span><svg style="left:318px;top:7px" width="16" height="15" viewBox="0 0 16 15"><rect x="5" y=".5" width="5" height="8.5" rx="2.5" fill="#c6c6c6"/><path d="M2.5 6.5 Q2.5 11.5 7.5 11.5 Q12.5 11.5 12.5 6.5 M7.5 11.5 V14 M5 14.2 H10" fill="none" stroke="#c6c6c6" stroke-width="1.1"/><path d="M1.5 1 L14.5 13.5" stroke="#ee6a6a" stroke-width="1"/></svg></div>
    <div class="row" style="top:229px"><div class="av"><svg style="left:0;top:0" width="26" height="26" viewBox="0 0 26 26"><rect width="26" height="26" fill="#fff"/><path d="M2 17 Q-1 5 9 1.500 Q19 -1 24 7 Q27 14 23 22 L20 26 H5 Q2 22 2 17 Z" fill="#f8b818"/><path d="M4 9 Q9 3 17 3 Q12 6 9 11 Z" fill="#fff2a8"/><path d="M19 4 Q24 9 22 20 Q20 14 17 9 Z" fill="#f09010"/><path d="M7 12 Q12 9 18 11 Q20 16 18 21 L13.500 25.500 L8.500 21 Q6.500 16 7 12 Z" fill="#fbe0c4"/><path d="M3 14 Q5 8 12 7 Q8 11 7 17 Q5 21 5 25 Q2 20 3 14 Z" fill="#f8a810"/><path d="M8.500 15 Q10.500 13.800 12 15 M14.500 15 Q16.500 13.800 18 15" stroke="#3a2a10" stroke-width="1.200" fill="none"/><circle cx="10.500" cy="16" r="1" fill="#4a3a30"/><circle cx="16.300" cy="16" r="1" fill="#4a3a30"/><path d="M12 21 Q13.500 21.800 15 21" stroke="#c07060" stroke-width=".7" fill="none"/></svg></div><div class="ph"></div><span class="nm">王红勇</span><svg style="left:318px;top:7px" width="16" height="15" viewBox="0 0 16 15"><rect x="5" y=".5" width="5" height="8.5" rx="2.5" fill="#c6c6c6"/><path d="M2.5 6.5 Q2.5 11.5 7.5 11.5 Q12.5 11.5 12.5 6.5 M7.5 11.5 V14 M5 14.2 H10" fill="none" stroke="#c6c6c6" stroke-width="1.1"/><path d="M1.5 1 L14.5 13.5" stroke="#ee6a6a" stroke-width="1"/></svg></div>
    <div class="row" style="top:257px"><div class="av"><svg style="left:0;top:0" width="26" height="26" viewBox="0 0 26 26"><defs><linearGradient id="skB" x1="0" y1="0" x2="0" y2="1"><stop offset="0" stop-color="#3a84dc"/><stop offset=".6" stop-color="#5aa4ea"/><stop offset="1" stop-color="#a8d8f8"/></linearGradient></defs><rect width="26" height="26" fill="url(#skB)"/><ellipse cx="10" cy="8" rx="5" ry="2.500" fill="#e8f4ff" opacity=".9"/><ellipse cx="13" cy="6.500" rx="3" ry="1.800" fill="#f4faff" opacity=".9"/><ellipse cx="9" cy="23" rx="7" ry="2.500" fill="#d8ecfc" opacity=".8"/><path d="M16 26 Q15.500 20 16.500 14.500" stroke="#1e3a28" stroke-width="1.500" fill="none"/><path d="M16.500 14.500 Q12 11.500 9 14.500 M16.500 14.500 Q13 15 11 19 M16.500 14.500 Q16 10 19 9 M16.500 14.500 Q21 12 24 15 M16.500 14.500 Q20 16 21 20 M16.500 14.500 Q14 12 12.500 10.500" stroke="#1e4a30" stroke-width="1.700" fill="none" stroke-linecap="round"/></svg></div><div class="ph"></div><span class="nm">肖其珍</span></div>
    <div class="row" style="top:285px"><div class="av"><svg style="left:0;top:0" width="26" height="26" viewBox="0 0 26 26"><rect width="26" height="26" fill="#c4ccd0"/><path d="M0 0 H26 V7 Q18 4 12 8 Q6 11 0 8 Z" fill="#8c9aa2"/><path d="M14 6 Q20 3 26 7 V16 Q20 12 14 14 Z" fill="#eef2f4"/><path d="M0 10 Q6 8 12 11 Q8 15 0 15 Z" fill="#a4b0b6"/><path d="M0 18 Q8 14 16 18 Q22 21 26 19 V26 H0 Z" fill="#dfe5e8"/><path d="M3 12 V16 M6 11.500 V16 M9 12 V15.500 M12 12.500 V15.500" stroke="#4a5a62" stroke-width="1.300"/><path d="M16 17 L17 26 M19 19 V26" stroke="#2a2a2a" stroke-width="1.800"/></svg></div><div class="ph"></div><span class="nm">杨晓霖</span><svg style="left:318px;top:7px" width="16" height="15" viewBox="0 0 16 15"><rect x="5" y=".5" width="5" height="8.5" rx="2.5" fill="#c6c6c6"/><path d="M2.5 6.5 Q2.5 11.5 7.5 11.5 Q12.5 11.5 12.5 6.5 M7.5 11.5 V14 M5 14.2 H10" fill="none" stroke="#c6c6c6" stroke-width="1.1"/><path d="M1.5 1 L14.5 13.5" stroke="#ee6a6a" stroke-width="1"/></svg></div>
    <div class="row" style="top:313px"><div class="av"><svg style="left:0;top:0" width="26" height="26" viewBox="0 0 26 26"><rect width="26" height="26" fill="#2f5a24"/><circle cx="4" cy="9" r="2.600" fill="#c01c1c"/><circle cx="9" cy="12.500" r="2.800" fill="#d02424"/><circle cx="3.500" cy="15.500" r="2.400" fill="#b81818"/><circle cx="8" cy="6" r="1.800" fill="#e0a020"/><circle cx="11" cy="18" r="2" fill="#c82020"/><circle cx="22" cy="17" r="2" fill="#b81c1c"/><rect x="0" y="20" width="26" height="6" fill="#7a8a5a"/><path d="M13.500 10 Q17.500 8.500 20.500 11 L21.500 21 Q17 23 13 21 Z" fill="#3a7f96"/><ellipse cx="17" cy="6.500" rx="2.600" ry="3" fill="#e4bc9c"/><path d="M14.200 6 Q14.500 2.800 17.200 3 Q20 3.200 19.800 7 Q17 4.500 14.200 6 Z" fill="#1c1410"/><path d="M13.500 12 L10 15.500 L11 17 L14.500 14.500 Z" fill="#e4bc9c"/><path d="M14 21 L12 26 H16 L17 22 Z" fill="#e4c8b0"/></svg></div><div class="ph"></div><span class="nm">易亚婷</span><svg style="left:318px;top:7px" width="16" height="15" viewBox="0 0 16 15"><rect x="5" y=".5" width="5" height="8.5" rx="2.5" fill="#c6c6c6"/><path d="M2.5 6.5 Q2.5 11.5 7.5 11.5 Q12.5 11.5 12.5 6.5 M7.5 11.5 V14 M5 14.2 H10" fill="none" stroke="#c6c6c6" stroke-width="1.1"/><path d="M1.5 1 L14.5 13.5" stroke="#ee6a6a" stroke-width="1"/></svg></div>
    <div class="row" style="top:341px"><div class="av"><svg style="left:0;top:0" width="26" height="26" viewBox="1 0.8 24 25.2" preserveAspectRatio="none"><ellipse cx="13" cy="13" rx="8.300" ry="11.200" fill="#141414"/><path d="M5.200 12 Q1.200 15.500 3 21.500 Q5.200 19.500 6.200 16.500 Z M20.800 12 Q24.800 15.500 23 21.500 Q20.800 19.500 19.800 16.500 Z" fill="#141414"/><ellipse cx="13" cy="18.700" rx="5.500" ry="5.500" fill="#fff"/><ellipse cx="10.900" cy="6.800" rx="1.800" ry="2.400" fill="#fff"/><ellipse cx="15.100" cy="6.800" rx="1.800" ry="2.400" fill="#fff"/><circle cx="11.300" cy="7" r=".8" fill="#111"/><circle cx="14.700" cy="7" r=".8" fill="#111"/><ellipse cx="13" cy="10.600" rx="4" ry="1.700" fill="#f8c400"/><path d="M4.800 10 Q13 16.500 21.200 10 L22 13.600 Q13 19.600 4 13.600 Z" fill="#e8251c"/><path d="M7.800 15.300 L11 16.600 L10.800 20.300 Q9.200 21.600 7.600 20 Z" fill="#e8251c"/><ellipse cx="8.200" cy="24.300" rx="3.800" ry="1.500" fill="#f8a800"/><ellipse cx="17.800" cy="24.300" rx="3.800" ry="1.500" fill="#f8a800"/></svg></div><div class="ph"></div><span class="nm">赵修忠</span><svg style="left:318px;top:7px" width="16" height="15" viewBox="0 0 16 15"><rect x="5" y=".5" width="5" height="8.5" rx="2.5" fill="#c6c6c6"/><path d="M2.5 6.5 Q2.5 11.5 7.5 11.5 Q12.5 11.5 12.5 6.5 M7.5 11.5 V14 M5 14.2 H10" fill="none" stroke="#c6c6c6" stroke-width="1.1"/><path d="M1.5 1 L14.5 13.5" stroke="#ee6a6a" stroke-width="1"/></svg></div>
    <div class="row" style="top:369px"><div class="av"><svg style="left:0;top:0" width="26" height="26" viewBox="0 0 26 26"><defs><radialGradient id="orA" cx=".4" cy=".35" r=".8"><stop offset="0" stop-color="#ffd84a"/><stop offset=".5" stop-color="#fbaa14"/><stop offset="1" stop-color="#f08600"/></radialGradient></defs><rect width="26" height="26" fill="url(#orA)"/><path d="M2 12 Q8 4 18 6 Q24 8 25 14 M4 18 Q12 10 22 14 M6 22 Q14 16 24 20 M8 4 Q14 10 12 24" fill="none" stroke="#ffe9a0" stroke-width=".9" opacity=".8"/></svg></div><div class="ph"></div><span class="nm">周伟平</span><svg style="left:319px;top:8px" width="12" height="13" viewBox="0 0 12 13"><circle cx="1.400" cy="6.500" r="1.300" fill="#5cb531"/><path d="M4.500 3.300 Q6.800 6.500 4.500 9.700 M7.500 .7 Q12 6.500 7.500 12.300" fill="none" stroke="#5cb531" stroke-width="1.300"/></svg></div>
    <div class="row" style="top:397px"><div class="av"><svg style="left:0;top:0" width="26" height="26" viewBox="0 0 26 26"><rect width="26" height="26" fill="#5c8c34"/><path d="M0 0 H10 L4 8 L0 6 Z M18 0 H26 V8 L20 5 Z M0 20 L6 18 L10 26 H0 Z" fill="#8cb45a"/><circle cx="8" cy="8" r="3" fill="#b01424"/><circle cx="14" cy="6" r="2.600" fill="#c81c2c"/><circle cx="18" cy="11" r="3" fill="#a01020"/><circle cx="11" cy="13" r="3.200" fill="#c01828"/><circle cx="6" cy="15" r="2.600" fill="#981020"/><circle cx="15" cy="18" r="3" fill="#b81424"/><circle cx="9" cy="20.500" r="2.400" fill="#a81222"/><circle cx="20" cy="18" r="2.200" fill="#c01c2c"/><circle cx="7.300" cy="7" r=".8" fill="#f0a0a8"/><circle cx="10.300" cy="12" r=".8" fill="#f0a0a8"/><circle cx="14.300" cy="17" r=".8" fill="#f0a0a8"/></svg></div><div class="ph"></div><span class="nm">朱惠延</span><svg style="left:318px;top:7px" width="16" height="15" viewBox="0 0 16 15"><rect x="5" y=".5" width="5" height="8.5" rx="2.5" fill="#c6c6c6"/><path d="M2.5 6.5 Q2.5 11.5 7.5 11.5 Q12.5 11.5 12.5 6.5 M7.5 11.5 V14 M5 14.2 H10" fill="none" stroke="#c6c6c6" stroke-width="1.1"/><path d="M1.5 1 L14.5 13.5" stroke="#ee6a6a" stroke-width="1"/></svg></div>
    <div class="row" style="top:425px"><div class="av"><svg style="left:0;top:0" width="26" height="26" viewBox="0 0 26 26"><rect width="26" height="26" fill="#fbfbfb"/><path d="M3 26 Q3 17 10 15.500 H16 Q23 17 23 26 Z" fill="#8c8c8c"/><path d="M10 15.500 L13 20 L16 15.500 Z" fill="#d8d8d8"/><ellipse cx="13" cy="9" rx="4.800" ry="5.800" fill="#d4d4d4"/><path d="M8 8 Q7.500 1.800 13 2 Q18.800 2 18.200 8.500 Q16 4.800 12.500 5.500 Q9.500 5.500 8 8 Z" fill="#1c1c1c"/><path d="M10 9 H12 M14 9 H16" stroke="#333" stroke-width=".9"/><path d="M12 18 Q13 14.500 15.500 16 Q16.500 19 14.500 22 Q12.500 21.500 12 18 Z" fill="#c8c8c8" stroke="#555" stroke-width=".6"/></svg></div><span class="nm">黄宠辉</span><svg style="left:318px;top:7px" width="16" height="15" viewBox="0 0 16 15"><rect x="5" y=".5" width="5" height="8.5" rx="2.5" fill="#c6c6c6"/><path d="M2.5 6.5 Q2.5 11.5 7.5 11.5 Q12.5 11.5 12.5 6.5 M7.5 11.5 V14 M5 14.2 H10" fill="none" stroke="#c6c6c6" stroke-width="1.1"/><path d="M1.5 1 L14.5 13.5" stroke="#ee6a6a" stroke-width="1"/></svg></div>
    <div class="row" style="top:453px"><div class="av"><svg style="left:0;top:0" width="26" height="26" viewBox="0 0 26 26"><rect width="26" height="26" fill="#f2f2f2"/><path d="M0 26 V14 Q5 12 9 15 L17 26 Z" fill="#303030"/><path d="M9 15 L13 24 L17 17 L20 26 H17 Z" fill="#4a4a4a"/><path d="M10 15.500 L13 21 L16 15.500 Z" fill="#e8e8e8"/><ellipse cx="14" cy="10" rx="5" ry="6" fill="#cfcfcf"/><path d="M9 9 Q8 3 14 3 Q20.200 3 19.300 9.500 Q17 5.500 13.500 6.300 Q10.500 6.300 9 9 Z" fill="#1a1a1a"/><rect x="10" y="9" width="3.400" height="2.400" fill="none" stroke="#222" stroke-width=".8"/><rect x="14.600" y="9" width="3.400" height="2.400" fill="none" stroke="#222" stroke-width=".8"/><path d="M13.400 10 H14.600" stroke="#222" stroke-width=".7"/><path d="M21 14 L25 22" stroke="#bbb" stroke-width="1"/></svg></div><span class="nm">唐志刚</span><svg style="left:319px;top:8px" width="12" height="13" viewBox="0 0 12 13"><circle cx="1.400" cy="6.500" r="1.300" fill="#5cb531"/><path d="M4.500 3.300 Q6.800 6.500 4.500 9.700 M7.500 .7 Q12 6.500 7.500 12.300" fill="none" stroke="#5cb531" stroke-width="1.300"/></svg></div>
    <div class="row" style="top:481px"><div class="av"><svg style="left:0;top:0" width="26" height="26" viewBox="0 0 26 26"><rect width="26" height="26" fill="#8a6a3c"/><rect x="0" y="0" width="26" height="6" fill="#a05a38"/><rect x="0" y="16" width="26" height="10" fill="#6f8a44"/><g fill="#c8683c"><circle cx="4" cy="6" r="2"/><circle cx="10" cy="4" r="2.200"/><circle cx="16" cy="7" r="2.400"/><circle cx="22" cy="5" r="2"/><circle cx="7" cy="11" r="2.200"/><circle cx="13" cy="12" r="2"/><circle cx="20" cy="11.500" r="2.400"/><circle cx="3" cy="14" r="1.600"/></g><g fill="#5a7a34"><circle cx="5" cy="18" r="2"/><circle cx="12" cy="17" r="2"/><circle cx="18" cy="19" r="2.400"/><circle cx="9" cy="22" r="2"/><circle cx="22" cy="23" r="2"/></g><g fill="#d8a870"><circle cx="8" cy="8" r=".8"/><circle cx="18" cy="4" r=".8"/><circle cx="14" cy="9" r=".8"/><circle cx="23" cy="9" r=".8"/><circle cx="15" cy="20" r=".8"/></g></svg></div><div class="ph"></div><span class="nm">王会兰</span><span class="qt" style="left:302px;top:9px;color:#666">待加入</span></div>
  </div>
</div>

<div id="wps" class="abs">
  <div id="wtitle" class="abs">
    <div class="abs" style="left:0;top:47px;width:579px;height:1px;background:#c8cfdf"></div>
    <div class="tab" style="left:3px;width:69px;background:#638cf7"><span class="t w12" style="left:22px;top:10px;color:#fff">首页</span></div>
    <div class="tab" style="left:75px;width:113px">
      <svg style="left:12px;top:9px" width="13" height="15" viewBox="0 0 13 15"><path d="M0 2 Q0 0 2 0 H6 Q13 0 13 7.5 Q13 15 6 15 H2 Q0 15 0 13 Z" fill="#f4491f"/><path d="M3.2 11.5 C2.6 8.5 3 6.5 4.6 5 C5 7 4.6 9.5 3.9 11.5 Z M5.2 11.8 C5.3 8 6.6 5.2 9.3 3.6 C9.2 7.2 7.8 10 6 11.8 Z" fill="#fff"/></svg>
      <span class="t w12" style="left:30px;top:10px;color:#333">稻壳模板</span>
    </div>
    <div class="tab" style="left:191px;width:101px">
      <div class="wic" style="left:10px;top:8px"></div>
      <svg style="left:10px;top:8px" width="16" height="16" viewBox="0 0 16 16"><path d="M4 5 V11 L8 7.5 L12 11 V5" fill="none" stroke="#fff" stroke-width="1.2"/></svg>
      <span class="t w12" style="left:30px;top:9px;color:#333;font-size:13px;width:30px;overflow:hidden;letter-spacing:-.3px">2-20:</span>
      <svg style="left:59px;top:11px" width="12" height="11" viewBox="0 0 12 11"><rect x=".5" y=".5" width="11" height="7.5" rx="1" fill="none" stroke="#aaa"/><path d="M6 8 V10 M3 10.5 H9" stroke="#aaa" fill="none"/></svg>
    </div>
    <div class="tab" style="left:295px;width:100px;background:#f5f5f5;border:1px solid #c0c9dc;border-bottom:none;height:30px">
      <div class="wic" style="left:9px;top:7px"></div>
      <svg style="left:9px;top:7px" width="16" height="16" viewBox="0 0 16 16"><path d="M4 5 V11 L8 7.5 L12 11 V5" fill="none" stroke="#fff" stroke-width="1.2"/></svg>
      <span class="t" style="left:30px;top:8px;color:#4f82ee;font-size:13px;width:25px;overflow:hidden">1-关</span>
      <svg style="left:57px;top:10px" width="12" height="11" viewBox="0 0 12 11"><rect x=".5" y=".5" width="11" height="7.5" rx="1" fill="none" stroke="#aaa"/><path d="M6 8 V10 M3 10.5 H9" stroke="#aaa" fill="none"/></svg>
      <div class="abs" style="left:80px;top:12px;width:6px;height:6px;border-radius:50%;background:#e99a4c"></div>
    </div>
    <svg style="left:411px;top:28px" width="13" height="13" viewBox="0 0 13 13"><path d="M6.5 0.5 V12.5 M0.5 6.5 H12.5" stroke="#333" stroke-width="1.4"/></svg>
    <div class="abs" style="left:440px;top:26px;width:17px;height:16px;background:#6b6b6b;border-radius:2px;color:#fff;font-size:12px;line-height:16px;text-align:center">2</div>
    <div class="abs" style="left:458px;top:26px;width:1px;height:16px;background:#6b6b6b"></div>
    <div class="abs" style="left:460px;top:26px;width:1px;height:16px;background:#6b6b6b"></div>
    <div class="abs" style="left:473px;top:20px;width:1px;height:24px;background:#dfe2ea"></div>
    <div class="abs" style="left:486px;top:21px;width:80px;height:22px;border-radius:11px;background:#d8695e;color:#f3d6d2;font-size:12px;line-height:21px;padding-left:11px">访客登录</div>
    <div class="abs" style="left:547px;top:27px;width:14px;height:14px;border-radius:50%;background:#b9504a"></div>
    <div class="abs" style="left:550px;top:32px;width:9px;height:7px;border-radius:50%;background:#e6bdb8"></div>
  </div>
  <div id="wmenu" class="abs">
    <svg style="left:16px;top:14px" width="14" height="9" viewBox="0 0 14 9"><path d="M0 .5 H14 M0 4.500 H14 M0 8.500 H14" stroke="#3c3c3c" stroke-width="1"/></svg>
    <span class="mi" style="left:36px">文件</span>
    <svg style="left:68px;top:17px" width="10" height="6" viewBox="0 0 10 6"><path d="M.5 .5 L5 5 L9.5 .5" fill="none" stroke="#777" stroke-width="1"/></svg>
    <div class="sep" style="left:86px;top:7px;height:24px;background:#d0d0d0"></div>
    <svg style="left:100px;top:15px" width="9" height="8" viewBox="0 0 9 8"><path d="M.5 .5 L4 4 L.5 7.5 M4.5 .5 L8 4 L4.5 7.5" fill="none" stroke="#888" stroke-width="1"/></svg>
    <div class="abs" style="left:124px;top:9px;width:28px;height:20px;background:#5b8cec"></div>
    <span class="mi" style="left:126px;color:#fff;font-weight:bold">开始</span>
    <div class="mb" style="left:152px"></div><span class="mi" style="left:154px">插入</span><div class="mb" style="left:180px"></div>
    <span class="mi" style="left:182px">页面布局</span><div class="mb" style="left:232px"></div>
    <span class="mi" style="left:234px">引用</span><div class="mb" style="left:260px"></div>
    <span class="mi" style="left:262px">审阅</span><div class="mb" style="left:288px"></div>
    <span class="mi" style="left:290px">视图</span><div class="mb" style="left:316px"></div>
    <span class="mi" style="left:318px;width:7px;overflow:hidden">章节</span>
    <div class="abs" style="left:325px;top:8px;width:13px;height:23px;background:#b4b8c3"></div>
    <svg style="left:329px;top:16px" width="5" height="7" viewBox="0 0 5 7"><path d="M.5 .5 L4 3.5 L.5 6.5" fill="none" stroke="#555" stroke-width=".9"/></svg>
    <svg style="left:356px;top:12px" width="15" height="15" viewBox="0 0 15 15"><circle cx="5.5" cy="5.5" r="4.8" fill="none" stroke="#444" stroke-width="1.2"/><path d="M9 9 L14 14" stroke="#444" stroke-width="1.4"/></svg>
    <span class="mi" style="left:372px;color:#555">查找</span>
    <svg style="left:426px;top:12px" width="18" height="15" viewBox="0 0 18 15"><path d="M9 11.5 H4.5 C2.2 11.5 .8 10 .8 8 C.8 6 2.2 4.8 4 4.8 C4.8 2.2 6.6 1 9 1 C12 1 14 3 14.3 5.5 C15.6 5.8 16.5 6.8 16.5 8" fill="none" stroke="#444" stroke-width="1.1"/><circle cx="12.5" cy="11" r="3.2" fill="#a9acc6"/><path d="M10.8 11 H14.2" stroke="#fff" stroke-width="1.1"/></svg>
    <div class="car" style="left:446px;top:18px"></div>
    <svg style="left:463px;top:12px" width="15" height="14" viewBox="0 0 15 14"><circle cx="6" cy="3.6" r="2.9" fill="none" stroke="#444" stroke-width="1.1"/><path d="M10.5 12.8 H2.5 C1.2 12.8 .6 12 .9 11 C1.5 9 3.5 7.8 6 7.8 C7.2 7.8 8.2 8 9 8.5" fill="none" stroke="#444" stroke-width="1.1"/><path d="M12 5.5 V10.5 M9.5 8 H14.5" stroke="#444" stroke-width="1.1"/></svg>
    <svg style="left:489px;top:11px" width="15" height="15" viewBox="0 0 15 15"><path d="M.6 8 V13.5 H13.4 V8" fill="none" stroke="#444" stroke-width="1.1"/><path d="M3.5 10 C3.8 6 6.5 3.8 11.5 3.6 M8.5 .8 L12 3.6 L8.8 6.8" fill="none" stroke="#444" stroke-width="1.1"/></svg>
    <div class="sep" style="left:513px;top:8px;height:22px;background:#dadada"></div>
    <div class="abs" style="left:530px;top:12px;width:2px;height:2px;background:#444;box-shadow:0 5px 0 #444,0 10px 0 #444"></div>
    <svg style="left:550px;top:14px" width="15" height="8" viewBox="0 0 15 8"><path d="M.5 7.5 L7.5 .8 L14.5 7.5" fill="none" stroke="#444" stroke-width="1.1"/></svg>
  </div>
  <div id="wribbon" class="abs">
    <!-- paste -->
    <svg style="left:18px;top:6px" width="23" height="23" viewBox="0 0 23 23"><rect x=".6" y="2.6" width="17" height="18" rx="2.5" fill="none" stroke="#b5b5b5" stroke-width="1.1"/><rect x="5" y=".6" width="8" height="3.6" rx="1.5" fill="#f5f5f5" stroke="#b5b5b5" stroke-width="1.1"/><path d="M6 11 H21.5 V19 L18.5 22 H6 Z" fill="#f5f5f5" stroke="#b5b5b5" stroke-width="1.1" stroke-linejoin="round"/><path d="M18.5 22 V19 H21.5" fill="none" stroke="#b5b5b5" stroke-width=".9"/></svg>
    <span class="rt dis" style="left:13px;top:36px">粘贴</span>
    <div class="car" style="left:40px;top:41px"></div>
    <!-- cut -->
    <svg style="left:58px;top:7px" width="15" height="14" viewBox="0 0 15 14"><path d="M1.5 .8 L11.5 10.5 M13.5 .8 L3.5 10.5" stroke="#b5b5b5" stroke-width="1.1" fill="none"/><circle cx="2.6" cy="11.4" r="1.9" fill="none" stroke="#b5b5b5" stroke-width="1.1"/><circle cx="12.4" cy="11.4" r="1.9" fill="none" stroke="#b5b5b5" stroke-width="1.1"/></svg>
    <span class="rt dis" style="left:77px;top:9px">剪切</span>
    <!-- copy -->
    <svg style="left:58px;top:32px" width="15" height="15" viewBox="0 0 15 15"><rect x="3.6" y=".6" width="10.5" height="10.5" rx="1.5" fill="none" stroke="#b5b5b5" stroke-width="1.1"/><path d="M3.6 3.6 H2 Q.6 3.6 .6 5 V13 Q.6 14.4 2 14.4 H10 Q11.4 14.4 11.4 13 V11.2" fill="none" stroke="#b5b5b5" stroke-width="1.1"/></svg>
    <span class="rt dis" style="left:77px;top:36px">复制</span>
    <!-- format brush -->
    <svg style="left:118px;top:5px" width="21" height="23" viewBox="0 0 21 23"><path d="M7.5 7 V2.5 Q7.5 .8 9.2 .8 H11.8 Q13.5 .8 13.5 2.5 V7 H17 Q19.5 7 19.5 9.5 V12.5 H1.5 V9.5 Q1.5 7 4 7 Z" fill="#f5f5f5" stroke="#333" stroke-width="1.2" stroke-linejoin="round"/><path d="M1.5 12.5 H19.5 V21.7 H1.5 Z" fill="#e4e8f2" stroke="#4a82e8" stroke-width="1.1"/><path d="M0 21.8 H19.5" stroke="#4a82e8" stroke-width="1.1"/></svg>
    <span class="rt" style="left:111px;top:36px;color:#222">格式刷</span>
    <svg style="left:147px;top:55px" width="5" height="5" viewBox="0 0 5 5"><path d="M4.5 0 V4.5 H0" fill="none" stroke="#8a8a8a" stroke-width="1"/></svg>
    <div class="sep" style="left:158px;top:2px;height:61px;background:#e0e0e0"></div>
    <!-- font boxes -->
    <div class="abs" style="left:163px;top:2px;width:195px;height:24px;border:1px solid #cfcfcf;border-radius:4px;background:linear-gradient(90deg,#f8f8f8,#fbfbfb)"></div>
    <div class="abs" style="left:278px;top:2px;width:1px;height:24px;background:#cfcfcf"></div>
    <span class="rt" style="left:169px;top:9px">黑体</span>
    <span class="rt" style="left:282px;top:9px">五号</span>
    <div class="car" style="left:269px;top:14px"></div>
    <div class="car" style="left:348px;top:14px"></div>
    <!-- row1 right -->
    <svg style="left:365px;top:6px" width="17" height="15" viewBox="0 0 17 15"><path d="M.6 14.5 L6 1.5 L11.4 14.5 M2.6 10 H9.4" fill="none" stroke="#444" stroke-width="1.1"/><path d="M14 .3 V5.3 M11.5 2.8 H16.5" stroke="#3f7be6" stroke-width="1.1"/></svg>
    <svg style="left:392px;top:7px" width="16" height="15" viewBox="0 0 16 15"><path d="M.6 13.5 L5 2.5 L9.4 13.5 M2.2 9.8 H7.8" fill="none" stroke="#444" stroke-width="1.1"/><path d="M11 2.3 H15.5" stroke="#3f7be6" stroke-width="1.1"/></svg>
    <svg style="left:418px;top:6px" width="16" height="15" viewBox="0 0 16 15"><path d="M1 9 L9.5 1 L15 6.5 L7 14 H5.5 Z M6.5 14 H15" fill="none" stroke="#333" stroke-width="1.1" stroke-linejoin="round"/></svg>
    <span class="rt" style="left:446px;top:7px;font-size:9px;color:#3f7be6;letter-spacing:-.4px">wén</span>
    <span class="rt" style="left:448px;top:15px;font-size:11px;color:#333;height:9px;overflow:hidden">文</span>
    <div class="car" style="left:465px;top:14px"></div>
    <!-- row2 -->
    <span class="rt" style="left:168px;top:31px;font-size:17px;font-weight:bold;color:#333">B</span>
    <span class="rt" style="left:197px;top:31px;font-size:17px;font-style:italic;color:#333;font-family:'Liberation Serif',serif">I</span>
    <svg style="left:218px;top:33px" width="13" height="16" viewBox="0 0 13 16"><path d="M1.2 0 V7.5 Q1.2 12 6.5 12 Q11.8 12 11.8 7.5 V0" fill="none" stroke="#444" stroke-width="1.2"/><path d="M0 15 H13" stroke="#3f7be6" stroke-width="1.2"/></svg>
    <div class="car" style="left:236px;top:40px"></div>
    <svg style="left:250px;top:33px" width="18" height="15" viewBox="0 0 18 15"><path d="M2.5 14.5 L8.2 1 Q9 -.2 9.8 1 L15.5 14.5" fill="none" stroke="#444" stroke-width="1.1"/><path d="M0 9.3 H18" stroke="#d83b3b" stroke-width="1.1"/></svg>
    <div class="car" style="left:270px;top:40px"></div>
    <svg style="left:285px;top:31px" width="17" height="16" viewBox="0 0 17 16"><path d="M.8 4 L11.2 15 M11.2 4 L.8 15" stroke="#444" stroke-width="1.1"/></svg>
    <span class="rt" style="left:297px;top:30px;font-size:9px;font-weight:bold;color:#3f7be6">2</span>
    <svg style="left:310px;top:33px" width="17" height="16" viewBox="0 0 17 16"><path d="M.8 2 L11.2 13 M11.2 2 L.8 13" stroke="#444" stroke-width="1.1"/></svg>
    <span class="rt" style="left:322px;top:40px;font-size:9px;font-weight:bold;color:#3f7be6">2</span>
    <svg style="left:338px;top:33px" width="16" height="15" viewBox="0 0 16 15"><path d="M1 14 L6.8 1.2 Q8 -.2 9.2 1.2 L15 14 H11.6 L8 5.2 L4.4 14 Z M4.8 10 H11.2" fill="#fff" stroke="#333" stroke-width="1" stroke-linejoin="round"/></svg>
    <div class="car" style="left:357px;top:40px"></div>
    <span class="rt" style="left:372px;top:32px;font-size:13px;color:#333;letter-spacing:-1px">ab</span>
    <svg style="left:384px;top:37px" width="6" height="6" viewBox="0 0 6 6"><path d="M0 6 L1 3.5 L4.5 0 L6 1.5 L2.5 5 Z" fill="#333"/></svg>
    <div class="abs" style="left:372px;top:44px;width:16px;height:4px;border-radius:2px;background:#ffff00;border:1px solid #c9c400"></div>
    <div class="car" style="left:391px;top:40px"></div>
    <svg style="left:409px;top:32px" width="14" height="12" viewBox="0 0 14 12"><path d="M1 11.5 L7 .8 L13 11.5 M3.4 7.5 H10.6" fill="none" stroke="#444" stroke-width="1.1"/></svg>
    <div class="abs" style="left:407px;top:44px;width:14px;height:3px;border-radius:1.5px;background:#0000ee"></div>
    <div class="car" style="left:425px;top:40px"></div>
    <div class="abs" style="left:440px;top:32px;width:16px;height:16px;background:#dadada;border-radius:1px"></div>
    <svg style="left:442px;top:34px" width="12" height="12" viewBox="0 0 12 12"><path d="M.5 11.8 L6 .6 L11.5 11.8 M2.6 7.6 H9.4" fill="none" stroke="#444" stroke-width="1.1"/></svg>
    <svg style="left:470px;top:55px" width="5" height="5" viewBox="0 0 5 5"><path d="M4.5 0 V4.5 H0" fill="none" stroke="#8a8a8a" stroke-width="1"/></svg>
    <div class="sep" style="left:480px;top:2px;height:61px;background:#e0e0e0"></div>
    <!-- lists -->
    <svg style="left:491px;top:6px" width="15" height="15" viewBox="0 0 15 15"><g fill="none" stroke="#444" stroke-width="1.1"><circle cx="1.6" cy="1.6" r="1.1"/><circle cx="1.6" cy="7.6" r="1.1"/><circle cx="1.6" cy="13.6" r="1.1"/><path d="M4.5 1.6 H14.5 M4.5 7.6 H14.5 M4.5 13.6 H14.5"/></g></svg>
    <div class="car" style="left:510px;top:14px"></div>
    <svg style="left:525px;top:6px" width="15" height="15" viewBox="0 0 15 15"><g fill="none" stroke="#444" stroke-width="1.1"><path d="M.3 .8 H1.8 V2.6 M.3 6.6 H2.6 M.3 8.6 H2.6 M.3 12.6 H2.6 V14.6 H.3 M4.5 1.6 H14.5 M4.5 7.6 H14.5 M4.5 13.6 H14.5"/></g></svg>
    <div class="car" style="left:544px;top:14px"></div>
    <svg style="left:561px;top:6px" width="4" height="15" viewBox="0 0 4 15"><path d="M1 1.6 H3 M1 13.6 H3" stroke="#444" stroke-width="1.1"/><path d="M3 5.6 V9.6 L1 7.6 Z" fill="#3f7be6"/></svg>
    <!-- align -->
    <svg style="left:491px;top:35px" width="15" height="14" viewBox="0 0 15 14"><path d="M0 .5 H7 M0 4.5 H14.5 M0 8.5 H7 M0 12.5 H14.5" stroke="#444" stroke-width="1"/></svg>
    <svg style="left:516px;top:35px" width="15" height="14" viewBox="0 0 15 14"><path d="M4 .5 H11 M0 4.5 H14.5 M4 8.5 H11 M0 12.5 H14.5" stroke="#444" stroke-width="1"/></svg>
    <svg style="left:541px;top:35px" width="15" height="14" viewBox="0 0 15 14"><path d="M7.5 .5 H14.5 M0 4.5 H14.5 M7.5 8.5 H14.5 M0 12.5 H14.5" stroke="#444" stroke-width="1"/></svg>
    <div class="abs" style="left:561px;top:29px;width:4px;height:24px;border-radius:3px 0 0 3px;background:#c8c8c8"></div>
    <div class="abs" style="left:566px;top:1px;width:13px;height:61px;background:#b4b8c3"></div>
    <svg style="left:571px;top:30px" width="5" height="7" viewBox="0 0 5 7"><path d="M.5 .5 L4 3.5 L.5 6.5" fill="none" stroke="#555" stroke-width=".9"/></svg>
  </div>
  <div id="wdoc" class="abs">
    <div class="h1" style="left:11px;top:210px">关于开展南华大学 <span style="font-weight:400;-webkit-text-stroke:.35px #000">2020</span> 年第三次教职工</div>
    <div class="h1" style="left:158px;top:279px">理论学习的通知</div>
    <div class="abs" style="left:0;top:478px;width:100px;height:30px;overflow:hidden;font-family:'Liberation Serif','Noto Serif CJK SC',serif;font-size:25px;line-height:1;color:#000"><span class="t" style="left:-13px;top:3px">月</span><span class="t" style="left:24px;top:3px;letter-spacing:1.5px">30</span><span class="t" style="left:62px;top:3px;transform:scaleX(.9);transform-origin:0 0">日</span></div>
  </div>
  <div id="wvs" class="abs">
    <div class="abs" style="left:0;top:535px;width:14px;height:14px;background:#e6e6e6"></div>
    <div class="abs" style="left:0;top:0;width:14px;height:17px;background:#e8e8e8"></div>
    <svg style="left:3px;top:6px" width="8" height="9" viewBox="0 0 8 9"><path d="M1 0 H7 L4 3.5 Z" fill="#8a8a8a"/><path d="M.5 5.5 V8.5 H7.5 V5.5 M4 5.5 V8.5" fill="none" stroke="#8a8a8a" stroke-width="1"/></svg>
    <div class="tri" style="left:4px;top:25px;border-left:3px solid transparent;border-right:3px solid transparent;border-bottom:4px solid #777"></div>
    <div class="abs" style="left:0;top:41px;width:14px;height:44px;border-radius:7px;background:#f4f4f4;border:1px solid #b4b4b4"></div>
    <div class="tri" style="left:4px;top:467px;border-left:3px solid transparent;border-right:3px solid transparent;border-top:4px solid #777"></div>
    <svg style="left:4px;top:482px" width="7" height="8" viewBox="0 0 7 8"><path d="M0 3.5 L3.5 0 L7 3.5 Z M0 8 L3.5 4.5 L7 8 Z" fill="#777"/></svg>
    <div class="abs" style="left:4px;top:502px;width:6px;height:6px;border:1px solid #777;border-radius:1px"></div>
    <svg style="left:4px;top:519px" width="7" height="8" viewBox="0 0 7 8"><path d="M0 0 L3.5 3.5 L7 0 Z M0 4.5 L3.5 8 L7 4.5 Z" fill="#777"/></svg>
  </div>
  <div id="wside" class="abs">
    <div class="abs" style="left:15px;top:10px;width:16px;height:1px;background:#c4c4c4"></div>
    <div class="abs" style="left:15px;top:14px;width:16px;height:1px;background:#c4c4c4"></div>
    <svg style="left:15px;top:36px" width="16" height="14" viewBox="0 0 16 14"><path d="M0 13.2 H16" stroke="#333" stroke-width="1"/><path d="M2.5 13 L5 8.5 L12 1 Q13 .2 14.2 1.2 Q15.2 2.2 14.4 3.4 L7.5 11 L2.5 13 M5 8.5 L7.5 11" fill="none" stroke="#333" stroke-width="1" stroke-linejoin="round"/></svg>
    <svg style="left:17px;top:71px" width="13" height="18" viewBox="0 0 13 18"><path d="M1 1 V14 L4.6 11 L7 16.5 L9.4 15.4 L7 10.2 L11.6 10 Z" fill="none" stroke="#333" stroke-width="1.1" stroke-linejoin="round"/></svg>
    <svg style="left:15px;top:107px" width="17" height="16" viewBox="0 0 17 16"><g fill="#e8e8e8" stroke="#333" stroke-width="1"><path d="M0 3 H16 M0 8 H16 M0 13 H16"/><circle cx="14" cy="3" r="1.8"/><circle cx="3" cy="8" r="1.8"/><circle cx="7" cy="13" r="1.8"/></g></svg>
    <div class="abs" style="left:5px;top:506px;width:38px;height:1px;background:#d4d4d4"></div>
    <svg style="left:16px;top:524px" width="15" height="15" viewBox="0 0 15 15"><g fill="none" stroke="#333" stroke-width="1.1"><rect x=".6" y=".6" width="5.3" height="5.3" rx="1.3"/><rect x="8.8" y=".6" width="5.3" height="5.3" rx="1.3"/><rect x=".6" y="8.8" width="5.3" height="5.3" rx="1.3"/><rect x="8.8" y="8.8" width="5.3" height="5.3" rx="1.3"/></g></svg>
  </div>
  <div id="whs" class="abs">
    <div class="tri" style="left:8px;top:4px;border-top:3px solid transparent;border-bottom:3px solid transparent;border-right:4px solid #777"></div>
    <div class="abs" style="left:188px;top:1px;width:147px;height:13px;border-radius:7px;background:#f7f7f7;border:1px solid #b4b4b4"></div>
    <div class="tri" style="left:508px;top:4px;border-top:3px solid transparent;border-bottom:3px solid transparent;border-left:4px solid #777"></div>
  </div>
  <div id="wstatus" class="abs">
    <span class="rt" style="left:9px;top:10px;color:#666">页码: 1</span>
    <div class="sep" style="left:52px;top:2px;height:24px;background:#e2e2e2"></div>
    <svg style="left:105px;top:8px" width="14" height="13" viewBox="0 0 14 13"><g fill="none" stroke="#333" stroke-width="1.1"><path d="M.6 4 V1.6 Q.6 .6 1.6 .6 H4 M10 .6 H13.4 V4 M13.4 9 V11.4 Q13.4 12.4 12.4 12.4 H10 M4 12.4 H.6 V9 M13.2 .8 L8.5 5.5 M.8 12.2 L5.5 7.5"/></g></svg>
    <svg style="left:130px;top:8px" width="15" height="13" viewBox="0 0 15 13"><path d="M7.5 1.5 Q6.5 .6 5 .6 H1.6 Q.6 .6 .6 1.6 V11 Q.6 12 1.6 12 H5.5 Q7 12 7.5 12.6 Q8 12 9.5 12 H13.4 Q14.4 12 14.4 11 V1.6 Q14.4 .6 13.4 .6 H10 Q8.5 .6 7.5 1.5 V12.6" fill="none" stroke="#333" stroke-width="1.1"/></svg>
    <svg style="left:156px;top:7px" width="15" height="15" viewBox="0 0 15 15"><path d="M0 14.3 H14" stroke="#333" stroke-width="1"/><path d="M2 12.5 L3 9 L10.5 1.2 Q11.5 .4 12.6 1.4 Q13.6 2.4 12.8 3.5 L5.5 11.3 Z M3 9 L5.5 11.3 M9.3 2.5 L11.7 4.8" fill="none" stroke="#333" stroke-width="1" stroke-linejoin="round"/></svg>
    <div class="abs" style="left:178px;top:3px;width:23px;height:23px;border-radius:4px;background:#c6c6c6"></div>
    <svg style="left:183px;top:7px" width="14" height="15" viewBox="0 0 14 15"><path d="M2.2 .6 H9.5 L13.4 4.2 V12.8 Q13.4 14.4 11.8 14.4 H2.2 Q.6 14.4 .6 12.8 V2.2 Q.6 .6 2.2 .6 Z M3.5 7 H10.5 M3.5 10.5 H10.5" fill="none" stroke="#333" stroke-width="1.1"/></svg>
    <svg style="left:208px;top:7px" width="15" height="15" viewBox="0 0 15 15"><g fill="none" stroke="#333" stroke-width="1.1"><rect x=".6" y=".6" width="13.8" height="13.8" rx="1.6"/><path d="M3 4.5 H4.5 M6.5 4.5 H12 M3 7.5 H4.5 M6.5 7.5 H12 M3 10.5 H4.5 M6.5 10.5 H12"/></g></svg>
    <svg style="left:234px;top:7px" width="15" height="15" viewBox="0 0 15 15"><g fill="none" stroke="#333" stroke-width="1"><circle cx="7.5" cy="7.5" r="6.9"/><ellipse cx="7.5" cy="7.5" rx="3.2" ry="6.9"/><path d="M7.5 .6 V14.4 M1.3 4.8 H13.7 M1.3 10.2 H13.7"/></g></svg>
    <svg style="left:259px;top:6px" width="17" height="16" viewBox="0 0 17 16"><g fill="none" stroke="#333" stroke-width="1.1"><path d="M.8 10.5 Q4 5.5 8.5 5.5 Q13 5.500 16.200 10.500 Q13 15.400 8.500 15.400 Q4 15.400 .8 10.500 Z"/><circle cx="8.500" cy="10.500" r="2.600"/><path d="M8.500 .300 V3.400 M2.800 1.800 L4.600 4.300 M14.200 1.800 L12.400 4.300"/></g></svg>
    <div class="sep" style="left:288px;top:2px;height:24px;background:#e2e2e2"></div>
    <span class="rt" style="left:300px;top:10px;color:#666">200%</span>
    <div class="car" style="left:337px;top:14px"></div>
    <div class="abs" style="left:353px;top:14px;width:12px;height:2px;background:#333"></div>
    <div class="abs" style="left:376px;top:14px;width:137px;height:1px;background:#c4c4c4"></div><div class="abs" style="left:376px;top:14px;width:80px;height:1px;background:#777"></div>
    <div class="abs" style="left:445px;top:11px;width:1px;height:6px;background:#888"></div>
    <div class="abs" style="left:455px;top:8px;width:13px;height:13px;border-radius:50%;background:#f5f5f5;border:1px solid #444"></div>
    <svg style="left:525px;top:9px" width="12" height="12" viewBox="0 0 12 12"><path d="M6 0 V12 M0 6 H12" stroke="#333" stroke-width="1.4"/></svg>
    <svg style="left:551px;top:8px" width="13" height="13" viewBox="0 0 13 13"><g fill="none" stroke="#333" stroke-width="1.1"><path d="M.6 4 V2 Q.6 .6 2 .6 H4 M9 .6 H11 Q12.4 .6 12.4 2 V4 M12.4 9 V11 Q12.4 12.4 11 12.4 H9 M4 12.4 H2 Q.6 12.4 .6 11 V9"/></g><circle cx="6.500" cy="6.500" r="1" fill="#333"/></svg>
  </div>
</div>

<div id="banner" class="abs"><span class="qt" style="left:26px;top:11px;color:#000">正在分享屏幕</span><span class="qt" style="left:114px;top:11px;color:#000">00:03:52</span><div class="abs" style="left:172px;top:8px;width:1px;height:16px;background:#e6e6e6"></div><span class="qt" style="left:196px;top:11px;color:#000">欧阳自根...等14人正在观看</span></div>
<div id="tip" class="abs"><span class="qt" style="left:12px;top:11px;color:#fff">说话中<span lang="zh-TW" style="font-family:'Noto Sans CJK TC',sans-serif">：</span>高有<span lang="zh-TW" style="font-family:'Noto Sans CJK TC',sans-serif">；</span>唐志刚<span lang="zh-TW" style="font-family:'Noto Sans CJK TC',sans-serif">；</span></span></div>
<div id="taskbar" class="abs">
  <div class="abs" style="left:0;top:0;width:1366px;height:40px;background:linear-gradient(180deg,rgba(255,255,255,.05) 0,rgba(255,255,255,0) 45%,rgba(0,0,0,.04) 100%)"></div>
  <div class="abs" style="left:8px;top:1px;width:38px;height:38px;border-radius:50%;background:radial-gradient(circle at 50% 25%,#a8d0f0 0,#3f86d0 40%,#174a98 75%,#0c2a60 100%);box-shadow:0 0 0 1px #0a1a30,0 0 4px 1px rgba(120,170,230,.6)"></div>
  <svg style="left:15px;top:8px" width="26" height="24" viewBox="-1 0 23 21"><path d="M1.500 3.500 Q6 1 10.500 3.200 L9.300 10 Q5 8 .5 10 Z" fill="#f0582a"/><path d="M12 3.600 Q16.500 5.500 21.500 3 L20.300 9.800 Q15.500 12 10.800 10.300 Z" fill="#8cc63f"/><path d="M.3 11.500 Q4.800 9.500 9 11.500 L7.800 18.500 Q3.500 16.500 -.8 18.500 Z" fill="#2ba3e8"/><path d="M10.500 11.900 Q15 13.600 20 11.300 L18.800 18 Q14 20.300 9.300 18.700 Z" fill="#fbbc0e"/></svg>
  <div class="tb" style="left:59px;width:59px;background:linear-gradient(100deg,rgba(200,215,235,.55),rgba(60,75,95,.55) 45%,rgba(150,170,195,.5) 80%,rgba(90,110,135,.5))"></div>
  <div class="abs" style="left:72px;top:3px;width:33px;height:33px;border-radius:50%;overflow:hidden;background:#fff"><svg style="left:0px;top:0px" width="16" height="16" viewBox="0 0 26 26"><rect width="26" height="26" fill="#f2f2f2"/><path d="M0 26 V14 Q5 12 9 15 L17 26 Z" fill="#303030"/><path d="M9 15 L13 24 L17 17 L20 26 H17 Z" fill="#4a4a4a"/><path d="M10 15.500 L13 21 L16 15.500 Z" fill="#e8e8e8"/><ellipse cx="14" cy="10" rx="5" ry="6" fill="#cfcfcf"/><path d="M9 9 Q8 3 14 3 Q20.200 3 19.300 9.500 Q17 5.500 13.500 6.300 Q10.500 6.300 9 9 Z" fill="#1a1a1a"/><rect x="10" y="9" width="3.400" height="2.400" fill="none" stroke="#222" stroke-width=".8"/><rect x="14.600" y="9" width="3.400" height="2.400" fill="none" stroke="#222" stroke-width=".8"/><path d="M13.400 10 H14.600" stroke="#222" stroke-width=".7"/><path d="M21 14 L25 22" stroke="#bbb" stroke-width="1"/></svg><svg style="left:17px;top:0px" width="16" height="16" viewBox="0 0 26 26"><rect width="26" height="26" fill="#6b4a2c"/><rect x="0" y="0" width="5" height="26" fill="#a89880"/><rect x="17" y="0" width="9" height="14" fill="#8a6a3c"/><path d="M2 26 Q3 16 9 15 L19 15 Q24 17 24 26 Z" fill="#3e8e8c"/><path d="M5 20 L8 18 M10 22 L13 19 M15 23 L18 20 M7 25 L10 23 M19 24 L21 21 M12 17 L14 16" stroke="#e4f2f0" stroke-width="1.300"/><ellipse cx="14" cy="9.500" rx="5.200" ry="5.800" fill="#e6bf9f"/><path d="M8.500 8 Q9 2.500 14 2.800 Q19.500 3 19.500 8.500 Q17 5.500 13 6 Q10 6 8.500 8 Z" fill="#2a1c12"/><circle cx="12" cy="9.500" r=".7" fill="#2a1c12"/><circle cx="16" cy="9.500" r=".7" fill="#2a1c12"/><path d="M12.500 12.500 Q14 13.300 15.500 12.500" stroke="#b06050" stroke-width=".7" fill="none"/></svg><svg style="left:0px;top:17px" width="16" height="16" viewBox="0 0 26 26"><rect width="26" height="26" fill="#fff"/><path d="M2 17 Q-1 5 9 1.500 Q19 -1 24 7 Q27 14 23 22 L20 26 H5 Q2 22 2 17 Z" fill="#f8b818"/><path d="M4 9 Q9 3 17 3 Q12 6 9 11 Z" fill="#fff2a8"/><path d="M19 4 Q24 9 22 20 Q20 14 17 9 Z" fill="#f09010"/><path d="M7 12 Q12 9 18 11 Q20 16 18 21 L13.500 25.500 L8.500 21 Q6.500 16 7 12 Z" fill="#fbe0c4"/><path d="M3 14 Q5 8 12 7 Q8 11 7 17 Q5 21 5 25 Q2 20 3 14 Z" fill="#f8a810"/><path d="M8.500 15 Q10.500 13.800 12 15 M14.500 15 Q16.500 13.800 18 15" stroke="#3a2a10" stroke-width="1.200" fill="none"/><circle cx="10.500" cy="16" r="1" fill="#4a3a30"/><circle cx="16.300" cy="16" r="1" fill="#4a3a30"/><path d="M12 21 Q13.500 21.800 15 21" stroke="#c07060" stroke-width=".7" fill="none"/></svg><svg style="left:17px;top:17px" width="16" height="16" viewBox="0 0 26 26"><rect width="26" height="26" fill="#2f5a24"/><circle cx="4" cy="9" r="2.600" fill="#c01c1c"/><circle cx="9" cy="12.500" r="2.800" fill="#d02424"/><circle cx="3.500" cy="15.500" r="2.400" fill="#b81818"/><circle cx="8" cy="6" r="1.800" fill="#e0a020"/><circle cx="11" cy="18" r="2" fill="#c82020"/><circle cx="22" cy="17" r="2" fill="#b81c1c"/><rect x="0" y="20" width="26" height="6" fill="#7a8a5a"/><path d="M13.500 10 Q17.500 8.500 20.500 11 L21.500 21 Q17 23 13 21 Z" fill="#3a7f96"/><ellipse cx="17" cy="6.500" rx="2.600" ry="3" fill="#e4bc9c"/><path d="M14.200 6 Q14.500 2.800 17.200 3 Q20 3.200 19.800 7 Q17 4.500 14.200 6 Z" fill="#1c1410"/><path d="M13.500 12 L10 15.500 L11 17 L14.500 14.500 Z" fill="#e4bc9c"/><path d="M14 21 L12 26 H16 L17 22 Z" fill="#e4c8b0"/></svg></div>
  <div class="tb" style="left:121px;width:59px;background:linear-gradient(100deg,rgba(130,160,195,.6),rgba(70,90,115,.55) 40%,rgba(170,190,215,.5) 75%,rgba(100,125,155,.5))"></div>
  <svg style="left:134px;top:4px" width="33" height="32" viewBox="0 0 33 32"><path d="M2 5 Q2 3 4 3 H12 L14 6 H29 Q31 6 31 8 V27 H2 Z" fill="#e8c35a" stroke="#b8902e" stroke-width="1"/><path d="M3 9 H30 V27 H3 Z" fill="#f8e08a"/><rect x="5" y="3.500" width="4" height="2.500" fill="#3aaa35"/><rect x="13" y="5" width="4" height="2.500" fill="#d83a2a"/><rect x="20" y="6.500" width="4" height="2.500" fill="#2a7ad8"/><path d="M7 18 Q7 15 10 15 H23 Q26 15 26 18 V29 H21 V22 H12 V29 H7 Z" fill="#7cc4ec" stroke="#3a88c8" stroke-width="1"/></svg>
  <div class="tb" style="left:183px;width:55px;background:linear-gradient(100deg,rgba(215,228,245,.8),rgba(150,175,210,.7) 45%,rgba(195,212,235,.75) 80%,rgba(160,185,215,.7))"></div>
  <div class="abs" style="left:239px;top:2px;width:3px;height:37px;border:1px solid rgba(20,28,40,.8);border-left:none;border-radius:0 3px 3px 0;background:rgba(200,215,235,.6)"></div>
  <div class="abs" style="left:195px;top:6px;width:28px;height:28px;border-radius:4px;background:linear-gradient(180deg,#2f86f6,#256ee8)"></div>
  <svg style="left:201px;top:14px" width="17" height="12" viewBox="0 0 17 12"><path d="M1.200 1.500 L5.200 11 L8.800 3.800 L12.400 11 L16 1.800 H10.500" fill="none" stroke="#fff" stroke-width="1.900" stroke-linejoin="round"/></svg>
  <!-- tray -->
  <svg style="left:1073px;top:9px" width="16" height="17" viewBox="0 0 18 18"><path d="M9 6 Q10 2 16 1" fill="none" stroke="#bbb" stroke-width="1"/><rect x=".5" y="6.500" width="17" height="10" rx="1.500" fill="#b9bcc0" stroke="#e4e4e4" stroke-width="1"/><path d="M3 9.500 H15 M3 12 H15 M5 14.500 H13" stroke="#555" stroke-width="1" stroke-dasharray="1.500 1"/></svg>
  <svg style="left:1097px;top:8px" width="10" height="20" viewBox="0 0 10 20"><rect x="3.500" y=".5" width="6" height="4" fill="none" stroke="#fff" stroke-width="1"/><rect x=".5" y="2.500" width="6" height="4" fill="#222c3c" stroke="#fff" stroke-width="1"/><path d="M2 14 H8 L5 17.500 Z" fill="#fff"/></svg>
  <svg style="left:1116px;top:9px" width="16" height="18" viewBox="0 0 18 20"><path d="M9 .8 Q13 3.500 17.200 3.500 V9 Q17.200 15.500 9 19.200 Q.8 15.500 .8 9 V3.500 Q5 3.500 9 .8 Z" fill="#3fa62e" stroke="#e8f0e8" stroke-width="1.200"/><path d="M10.500 4 L5.500 10.500 H8.800 L7.500 16 L12.800 8.800 H9.500 Z" fill="#fff"/></svg>
  <div class="abs" style="left:1140px;top:11px;width:16px;height:16px;border-radius:50%;background:#e8eef8;border:1px dotted #8aa"></div>
  <svg style="left:1143px;top:14px" width="10" height="10" viewBox="0 0 11 11"><path d="M1.500 10 V5.500 A4 4 0 0 1 9.500 5.500 V10" fill="none" stroke="#1a5ab8" stroke-width="2.400"/></svg>
  <svg style="left:1164px;top:10px" width="16" height="17" viewBox="0 0 18 19"><rect x="1" y="3" width="9" height="13" rx="1" fill="#d8d8d8" stroke="#fff" stroke-width="1"/><rect x="3.500" y="1.500" width="4" height="2" fill="#fff"/><path d="M9 4 V7 M14 4 V7 M7 7 H16 V11 Q16 13.500 13 13.500 H10 Q7 13.500 7 11 Z M11.500 13.500 V18" fill="#fff" stroke="#fff" stroke-width="1.200"/></svg>
  <svg style="left:1190px;top:11px" width="16" height="15" viewBox="0 0 17 16"><path d="M.8 5.500 H3.500 L8 1 V15 L3.500 10.500 H.8 Z" fill="#f4f4f4" stroke="#fff" stroke-width=".8"/><path d="M11 5 Q13 8 11 11" fill="none" stroke="#bbb" stroke-width="1.200"/></svg>
  <svg style="left:1213px;top:10px" width="16" height="17" viewBox="0 0 18 19"><rect x="1" y="1" width="4.500" height="6" fill="#ddd" stroke="#fff" stroke-width="1"/><path d="M3.200 7 V11" stroke="#fff" stroke-width="1.200"/><rect x="5.500" y="5" width="11" height="8.500" fill="#1e2838" stroke="#fff" stroke-width="1.300"/><path d="M11 13.500 V16.500 M7 17 H15" stroke="#fff" stroke-width="1.300"/></svg>
  <span class="tx" style="left:1278px;top:5px">20:05</span>
  <span class="tx" style="left:1244px;top:24px"><span style="letter-spacing:.7px">2020/5/31</span> 星期日</span>
  <div class="abs" style="left:1351px;top:0;width:15px;height:40px;background:linear-gradient(90deg,#3a424e,#2a323c);border-left:1px solid #5a626e"></div>
</div>

<!-- orange share frame corners -->
<div class="abs org" style="left:0;top:0;width:66px;height:5px;border-radius:0 0 8px 0"></div>
<div class="abs org" style="left:0;top:0;width:5px;height:66px;border-radius:0 0 5px 0"></div>
<div class="abs org" style="left:1300px;top:0;width:66px;height:5px;border-radius:0 0 0 8px"></div>
<div class="abs org" style="left:1361px;top:0;width:5px;height:66px;border-radius:0 0 0 5px"></div>
<div class="abs org" style="left:0;top:763px;width:66px;height:5px;border-radius:0 8px 0 0"></div>
<div class="abs org" style="left:0;top:702px;width:5px;height:66px;border-radius:0 5px 0 0"></div>
<div class="abs org" style="left:1300px;top:763px;width:66px;height:5px;border-radius:8px 0 0 0"></div>
<div class="abs org" style="left:1361px;top:702px;width:5px;height:66px;border-radius:5px 0 0 0"></div>
</body>
</html>
